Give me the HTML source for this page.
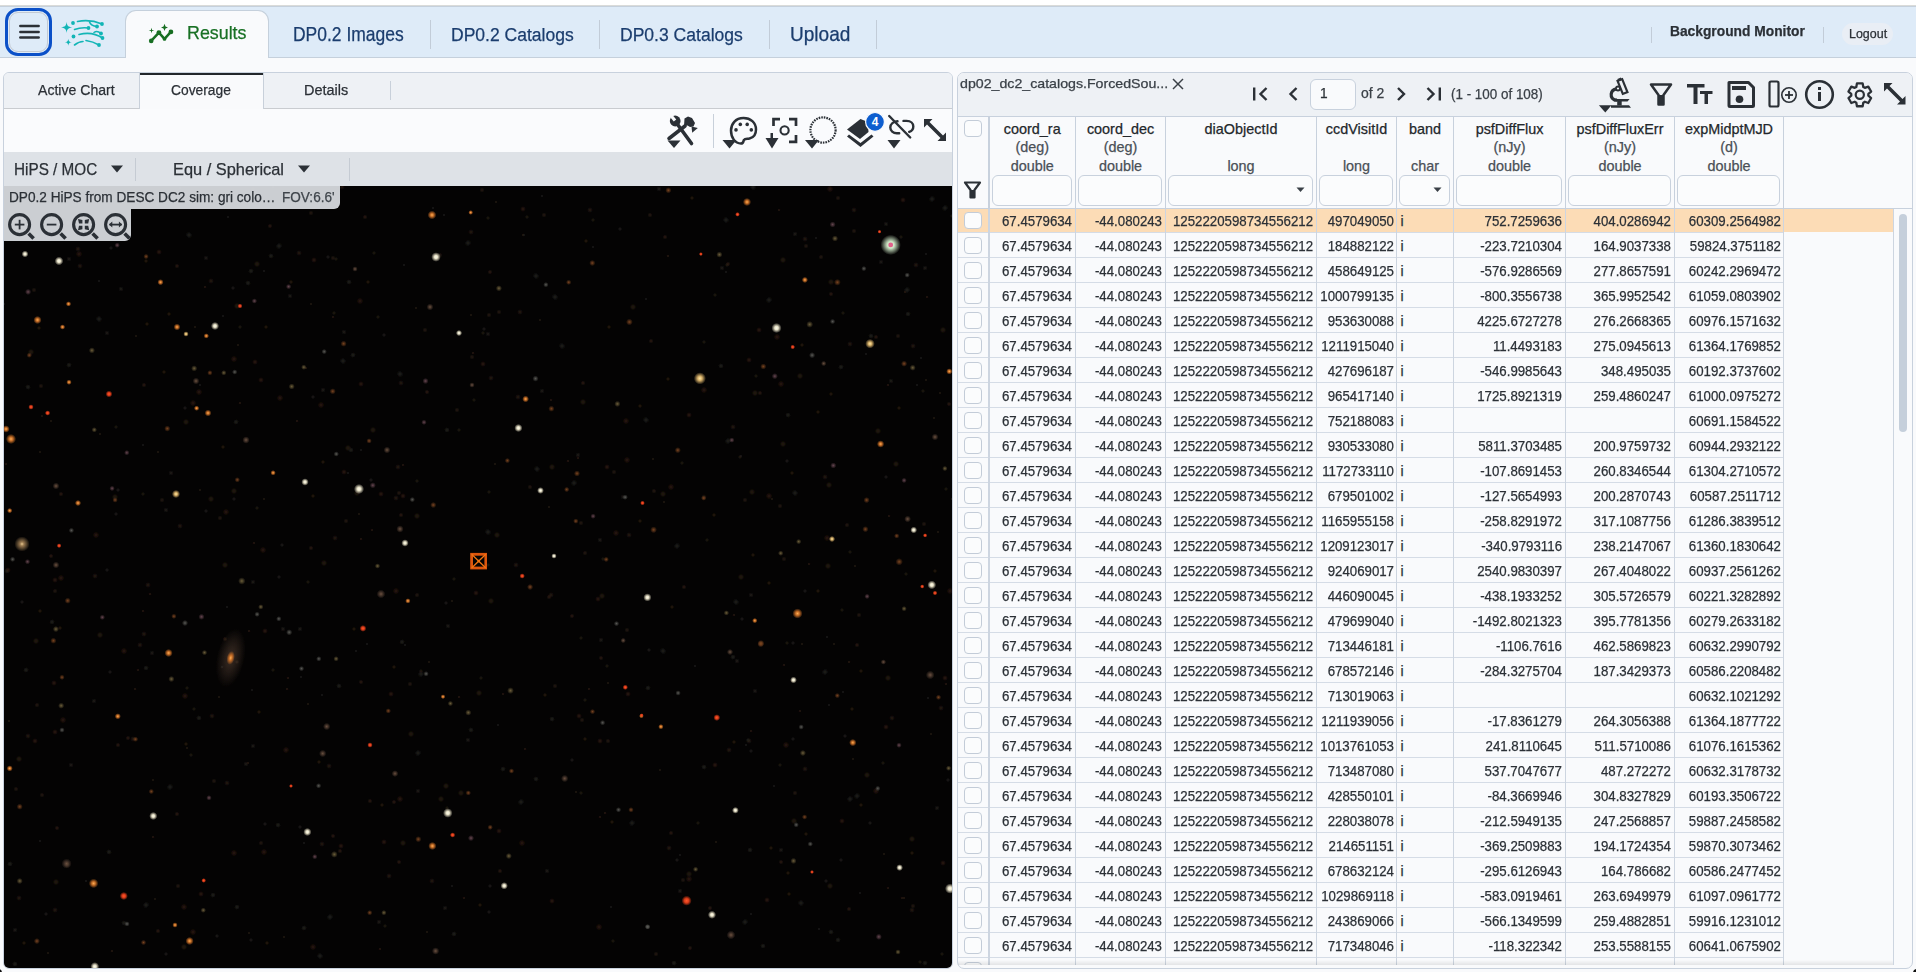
<!DOCTYPE html><html><head><meta charset="utf-8"><title>Firefly</title><style>
*{box-sizing:border-box}
html,body{margin:0;padding:0}
body{width:1916px;height:972px;overflow:hidden;position:relative;background:#f9fafc;font-family:"Liberation Sans",sans-serif;color:#2b3036}
.a{position:absolute}
.t{position:absolute;white-space:pre;line-height:1;-webkit-text-stroke:0.25px currentColor}
.c{width:200px;text-align:right;font-size:14px;color:#2b3036;transform:scaleX(0.947);transform-origin:100% 50%}
</style></head><body>
<div class="a" style="left:0px;top:0px;width:1916px;height:5px;background:#ffffff"></div>
<div class="a" style="left:0px;top:5px;width:1916px;height:1px;background:#dadbd9"></div>
<div class="a" style="left:0px;top:6px;width:1916px;height:1px;background:#c5d0dc"></div>
<div class="a" style="left:0px;top:7px;width:1916px;height:50px;background:#deebf8"></div>
<div class="a" style="left:0px;top:57px;width:1916px;height:1px;background:#c5d0dc"></div>
<div class="a" style="left:5px;top:8px;width:47px;height:48px;border:3.5px solid #0b50c8;border-radius:13px"></div>
<div class="a" style="left:9px;top:12px;width:39px;height:40px;border:1px solid #c3cad3;border-radius:9px"></div>
<svg class="a" style="left:19px;top:24px;" width="21" height="15" viewBox="0 0 21 15"><g stroke="#2b3036" stroke-width="2.4" stroke-linecap="round"><line x1="1.3" y1="2" x2="19.7" y2="2"/><line x1="1.3" y1="8" x2="19.7" y2="8"/><line x1="1.3" y1="13.5" x2="19.7" y2="13.5"/></g></svg>
<svg class="a" style="left:60px;top:18px;" width="46" height="32" viewBox="0 0 46 32"><g fill="#12b5b6" stroke="none">
<path d="M1.00 9.40 C5.03 8.98 6.18 7.83 6.60 3.80 C7.02 7.83 8.17 8.98 12.20 9.40 C8.17 9.82 7.02 10.97 6.60 15.00 C6.18 10.97 5.03 9.82 1.00 9.40Z"/>
<path d="M4.80 24.20 C7.32 23.94 8.04 23.22 8.30 20.70 C8.56 23.22 9.28 23.94 11.80 24.20 C9.28 24.46 8.56 25.18 8.30 27.70 C8.04 25.18 7.32 24.46 4.80 24.20Z"/>
<circle cx="13" cy="5" r="1.9"/><circle cx="13.5" cy="18.5" r="1.9"/>
<circle cx="42" cy="6" r="1.9"/><circle cx="37" cy="8.5" r="1.9"/><circle cx="28.5" cy="10" r="1.9"/>
<circle cx="41" cy="15.5" r="1.9"/><circle cx="42.5" cy="20" r="1.9"/><circle cx="39" cy="27" r="1.9"/>
</g><g fill="none" stroke="#12b5b6" stroke-width="1.6" stroke-linecap="round">
<path d="M17.5 3.5 Q30 1 42 6"/><path d="M29.5 4 Q31 8 37 8.5"/>
<path d="M14.5 11.5 Q21 9 28.5 10"/>
<path d="M19 16.5 Q32 13 42.5 20"/><path d="M34 14.5 Q37 12 41 15.5"/>
<path d="M14.5 27 Q19 23.5 23 23.5"/><path d="M26 22.5 Q33 23.5 39 27"/>
</g></svg>
<div class="a" style="left:125px;top:10px;width:144px;height:48px;background:#f9fafc;border:1px solid #c5d0dc;border-bottom:none;border-radius:11px 11px 0 0"></div>
<svg class="a" style="left:147px;top:23px;" width="28" height="22" viewBox="0 0 28 22"><g fill="#176e22"><path d="M17.5 0.8 L18.5 3.4 L21 4.4 L18.5 5.4 L17.5 8 L16.5 5.4 L14 4.4 L16.5 3.4Z"/>
<path d="M4.5 4.7 L5.1 6.9 L7.3 7.5 L5.1 8.1 L4.5 10.3 L3.9 8.1 L1.7 7.5 L3.9 6.9Z"/>
<circle cx="4.2" cy="17.9" r="2.3"/><circle cx="11.9" cy="9.6" r="2.4"/><circle cx="17.5" cy="15.9" r="1.9"/><circle cx="23.9" cy="8.9" r="2.4"/></g>
<path d="M4.2 17.9 L11.9 9.6 L17.5 15.9 L23.9 8.9" fill="none" stroke="#176e22" stroke-width="2.5" stroke-linejoin="round" stroke-linecap="round"/></svg>
<div class="t" style="left:186.97px;top:23.95px;font-size:18.84px;color:#187024;transform:scaleX(0.9478);transform-origin:0 0;">Results</div>
<div class="t" style="left:293.30px;top:24.56px;font-size:19.42px;color:#1b3d6e;transform:scaleX(0.9007);transform-origin:0 0;">DP0.2 Images</div>
<div class="t" style="left:450.90px;top:24.80px;font-size:19.13px;color:#1b3d6e;transform:scaleX(0.9172);transform-origin:0 0;">DP0.2 Catalogs</div>
<div class="t" style="left:620.10px;top:24.92px;font-size:18.99px;color:#1b3d6e;transform:scaleX(0.9235);transform-origin:0 0;">DP0.3 Catalogs</div>
<div class="t" style="left:789.67px;top:24.56px;font-size:19.42px;color:#1b3d6e;transform:scaleX(0.9821);transform-origin:0 0;">Upload</div>
<div class="a" style="left:429.5px;top:20px;width:1.0px;height:29px;background:#c2ccd8"></div>
<div class="a" style="left:598.5px;top:20px;width:1.0px;height:29px;background:#c2ccd8"></div>
<div class="a" style="left:768.5px;top:20px;width:1.0px;height:29px;background:#c2ccd8"></div>
<div class="a" style="left:875.5px;top:20px;width:1.0px;height:29px;background:#c2ccd8"></div>
<div class="a" style="left:1651px;top:27px;width:1px;height:16px;background:#c2ccd8"></div>
<div class="t" style="left:1670.03px;top:24.48px;font-size:14.78px;color:#2b3036;transform:scaleX(0.9334);transform-origin:0 0;font-weight:700;">Background Monitor</div>
<div class="a" style="left:1823px;top:27px;width:1px;height:16px;background:#c2ccd8"></div>
<div class="a" style="left:1842px;top:23px;width:51px;height:22px;background:#e9eef5;border-radius:11px"></div>
<div class="t" style="left:1848.80px;top:27.57px;font-size:12.32px;color:#2b3036;transform:scaleX(1.0113);transform-origin:0 0;">Logout</div>
<div class="a" style="left:3px;top:72px;width:950px;height:897px;border:1px solid #c8d1dd;border-radius:6px;background:#f9fafc;overflow:hidden"></div>
<div class="a" style="left:4px;top:73px;width:948px;height:35px;background:#eef1f5;border-radius:5px 5px 0 0"></div>
<div class="a" style="left:4px;top:108px;width:948px;height:1px;background:#c9ccd0"></div>
<div class="a" style="left:139px;top:73px;width:1px;height:36px;background:#c8d0da"></div>
<div class="a" style="left:140px;top:73px;width:124px;height:36px;background:#f9fafc"></div>
<div class="a" style="left:140px;top:73px;width:124px;height:2px;background:#23272b"></div>
<div class="a" style="left:263px;top:73px;width:1px;height:36px;background:#c8d0da"></div>
<div class="a" style="left:390px;top:81px;width:1px;height:19px;background:#c8d0da"></div>
<div class="t" style="left:38.30px;top:82.07px;font-size:15.51px;color:#2b3036;transform:scaleX(0.9080);transform-origin:0 0;">Active Chart</div>
<div class="t" style="left:171.41px;top:82.07px;font-size:15.51px;color:#2b3036;transform:scaleX(0.8912);transform-origin:0 0;">Coverage</div>
<div class="t" style="left:304.04px;top:82.07px;font-size:15.51px;color:#2b3036;transform:scaleX(0.9344);transform-origin:0 0;">Details</div>
<div class="a" style="left:4px;top:109px;width:948px;height:43px;background:#fafbfd"></div>
<svg class="a" style="left:664px;top:112px;" width="36" height="38" viewBox="0 0 36 38"><g fill="#2b3036" stroke="none">
<circle cx="11.2" cy="9" r="5.4"/>
<path d="M20.5 6.5 L24 4.5 L28 6 L31 11 L29.5 14.5 L26 15 L23.5 13.5 L20 14 Z"/>
<path d="M27.5 14.5 L33.8 16 L28.2 20.8 Z"/>
<path d="M3.5 28.5 L16.5 28.5 L10 36 Z"/>
</g><g stroke="#2b3036" stroke-width="3.6" stroke-linecap="round" fill="none">
<line x1="12.5" y1="11" x2="27.5" y2="31.5"/><line x1="21" y1="14" x2="5" y2="26.5"/></g>
<line x1="11" y1="8.5" x2="6" y2="2.5" stroke="#f9fafc" stroke-width="3.2"/></svg>
<div class="a" style="left:713px;top:114px;width:1px;height:34px;background:#c8d0da"></div>
<svg class="a" style="left:721px;top:114px;" width="40" height="36" viewBox="0 0 40 36"><path d="M22.5 4 C14.5 4 10 10 10 16.5 C10 23.5 14 29.5 20 29.5 C23 29.5 22 27 23 26 C24 24.5 26 25 28.5 24.5 C33 23.5 35 20 35 15.5 C35 8.5 29.5 4 22.5 4Z" fill="none" stroke="#2b3036" stroke-width="2.5"/>
<g fill="#2b3036"><circle cx="15" cy="15.9" r="1.8"/><circle cx="19.3" cy="10.4" r="1.8"/><circle cx="26.2" cy="10.4" r="1.8"/><circle cx="30.3" cy="15.9" r="1.8"/>
<path d="M1.5 26 L15.5 26 L8.5 34.5Z"/></g></svg>
<svg class="a" style="left:764px;top:114px;" width="36" height="36" viewBox="0 0 36 36"><g fill="none" stroke="#2b3036" stroke-width="2.7">
<path d="M9.5 12 V5.2 H16"/><path d="M25 5.2 H32 V12"/><path d="M32 21 V27.8 H25"/><circle cx="20.6" cy="16.4" r="4.1" stroke-width="2.1"/>
</g><g fill="#2b3036"><rect x="6.5" y="19" width="2.5" height="8"/><path d="M1.5 24 L14.5 24 L8 34.5Z"/></g></svg>
<svg class="a" style="left:803px;top:114px;" width="36" height="36" viewBox="0 0 36 36"><circle cx="20" cy="16" r="12.6" fill="none" stroke="#2b3036" stroke-width="2.2" stroke-dasharray="1.6 1.0"/>
<path d="M2 26 L16 26 L9 34.5Z" fill="#2b3036"/></svg>
<svg class="a" style="left:845px;top:110px;" width="42" height="40" viewBox="0 0 42 40"><g fill="#2b3036"><path d="M2 19.5 L15.5 9 L23 12 L23.5 22 L15 29 Z"/>
<path d="M2 26.5 L15.5 37 L28.5 26.5 L26.5 24.5 L15.5 33 L4 24.5Z"/></g>
<circle cx="30" cy="11.9" r="9.4" fill="#0e5ecf" stroke="#f9fafc" stroke-width="1.2"/>
<text x="30" y="16.3" text-anchor="middle" font-family="Liberation Sans" font-weight="700" font-size="12" fill="#fff">4</text></svg>
<svg class="a" style="left:886px;top:114px;" width="30" height="36" viewBox="0 0 30 36"><g fill="none" stroke="#2b3036" stroke-width="2.4" stroke-linecap="round">
<path d="M11.5 7.3 C7 7.8 4.3 10.6 4.3 13.5 C4.3 16.8 7.2 19.3 10.8 19.3 L13.2 19.3"/>
<path d="M17.5 6.9 L20.5 6.9 C25 6.9 27.3 9.6 27.3 12.4 C27.3 15 25.6 17 23.2 17.9"/>
<line x1="3.2" y1="2" x2="24.2" y2="23.5"/></g>
<path d="M1.5 26 L14.5 26 L8 34.5Z" fill="#2b3036"/></svg>
<svg class="a" style="left:922px;top:117px;" width="27" height="27" viewBox="0 0 27 27"><g fill="#2b3036"><path d="M2 2 L10.5 2 L7.5 5 L21 18.5 L24 15.5 L24 24 L15.5 24 L18.5 21 L5 7.5 L2 10.5Z"/></g></svg>
<div class="a" style="left:4px;top:152px;width:948px;height:34px;background:#dee2e7"></div>
<div class="t" style="left:14.48px;top:161.13px;font-size:16.38px;color:#2b3036;transform:scaleX(0.9343);transform-origin:0 0;">HiPS / MOC</div>
<svg class="a" style="left:110px;top:164px;" width="14" height="10" viewBox="0 0 14 10"><path d="M1 1.5 L13 1.5 L7 8.5Z" fill="#2b3036"/></svg>
<div class="a" style="left:135px;top:158px;width:1px;height:23px;background:#c5cbd3"></div>
<div class="t" style="left:173.39px;top:161.13px;font-size:16.38px;color:#2b3036;transform:scaleX(1.0005);transform-origin:0 0;">Equ / Spherical</div>
<svg class="a" style="left:297px;top:164px;" width="14" height="10" viewBox="0 0 14 10"><path d="M1 1.5 L13 1.5 L7 8.5Z" fill="#2b3036"/></svg>
<div class="a" style="left:349px;top:158px;width:1px;height:23px;background:#c5cbd3"></div>
<div class="a" style="left:4px;top:186px;width:948px;height:782px;background:#040303;border-radius:0 0 5px 5px;overflow:hidden">
<svg class="a" style="left:0;top:0" width="948" height="782" viewBox="4 186 948 782"><defs><radialGradient id="gw"><stop offset="0" stop-color="#fffef0"/><stop offset="0.35" stop-color="#e8e2c8"/><stop offset="1" stop-color="#e8e2c8" stop-opacity="0"/></radialGradient><radialGradient id="gy"><stop offset="0" stop-color="#ffe9a8"/><stop offset="0.35" stop-color="#d9b26a"/><stop offset="1" stop-color="#d9b26a" stop-opacity="0"/></radialGradient><radialGradient id="go"><stop offset="0" stop-color="#ffae55"/><stop offset="0.4" stop-color="#c06a25"/><stop offset="1" stop-color="#c06a25" stop-opacity="0"/></radialGradient><radialGradient id="gr"><stop offset="0" stop-color="#ff5a30"/><stop offset="0.45" stop-color="#d83a18"/><stop offset="1" stop-color="#d83a18" stop-opacity="0"/></radialGradient><radialGradient id="f1"><stop offset="0" stop-color="#261c14"/><stop offset="1" stop-color="#261c14" stop-opacity="0"/></radialGradient><radialGradient id="f2"><stop offset="0" stop-color="#201f1d"/><stop offset="1" stop-color="#201f1d" stop-opacity="0"/></radialGradient><radialGradient id="f3"><stop offset="0" stop-color="#2c1a12"/><stop offset="1" stop-color="#2c1a12" stop-opacity="0"/></radialGradient><radialGradient id="gbg"><stop offset="0" stop-color="#f0ffe8"/><stop offset="0.35" stop-color="#c8e0c0"/><stop offset="1" stop-color="#c8e0c0" stop-opacity="0"/></radialGradient><radialGradient id="gdy2"><stop offset="0" stop-color="#e8c890"/><stop offset="0.25" stop-color="#9a7a50"/><stop offset="1" stop-color="#9a7a50" stop-opacity="0"/></radialGradient><radialGradient id="gg"><stop offset="0" stop-color="#5a5a56"/><stop offset="1" stop-color="#5a5a56" stop-opacity="0"/></radialGradient><radialGradient id="gp"><stop offset="0" stop-color="#664650"/><stop offset="1" stop-color="#664650" stop-opacity="0"/></radialGradient><radialGradient id="gdy"><stop offset="0" stop-color="#6c5e3a"/><stop offset="1" stop-color="#6c5e3a" stop-opacity="0"/></radialGradient><radialGradient id="gdo"><stop offset="0" stop-color="#7a4420"/><stop offset="1" stop-color="#7a4420" stop-opacity="0"/></radialGradient><radialGradient id="gd"><stop offset="0" stop-color="#6a5040"/><stop offset="1" stop-color="#6a5040" stop-opacity="0"/></radialGradient><filter id="bl" x="-10%" y="-10%" width="120%" height="120%"><feGaussianBlur stdDeviation="0.55"/></filter></defs><g filter="url(#bl)"><circle cx="311" cy="304" r="1.8" fill="url(#f1)"/><circle cx="783" cy="260" r="3.4" fill="url(#f1)"/><circle cx="866" cy="354" r="1.8" fill="url(#f2)"/><circle cx="400" cy="374" r="3.4" fill="url(#f2)"/><circle cx="60" cy="628" r="2.2" fill="url(#f3)"/><circle cx="599" cy="927" r="3.4" fill="url(#f3)"/><circle cx="380" cy="949" r="1.8" fill="url(#f3)"/><circle cx="818" cy="412" r="2.2" fill="url(#f3)"/><circle cx="116" cy="427" r="2.2" fill="url(#f1)"/><circle cx="555" cy="686" r="2.6" fill="url(#f1)"/><circle cx="523" cy="235" r="1.8" fill="url(#f3)"/><circle cx="199" cy="718" r="3.0" fill="url(#f2)"/><circle cx="445" cy="908" r="2.6" fill="url(#f2)"/><circle cx="240" cy="327" r="2.2" fill="url(#f1)"/><circle cx="549" cy="597" r="2.6" fill="url(#f3)"/><circle cx="429" cy="662" r="1.8" fill="url(#f1)"/><circle cx="489" cy="315" r="2.6" fill="url(#f1)"/><circle cx="889" cy="516" r="1.8" fill="url(#f3)"/><circle cx="547" cy="871" r="2.6" fill="url(#f2)"/><circle cx="663" cy="651" r="3.4" fill="url(#f2)"/><circle cx="69" cy="259" r="2.6" fill="url(#f2)"/><circle cx="665" cy="237" r="2.6" fill="url(#f3)"/><circle cx="552" cy="719" r="3.0" fill="url(#f2)"/><circle cx="683" cy="880" r="2.6" fill="url(#f1)"/><circle cx="896" cy="464" r="3.4" fill="url(#f1)"/><circle cx="472" cy="357" r="2.6" fill="url(#f1)"/><circle cx="704" cy="497" r="3.0" fill="url(#f1)"/><circle cx="162" cy="500" r="2.6" fill="url(#f1)"/><circle cx="781" cy="862" r="2.6" fill="url(#f3)"/><circle cx="398" cy="467" r="3.0" fill="url(#f1)"/><circle cx="147" cy="324" r="2.2" fill="url(#f3)"/><circle cx="225" cy="565" r="3.4" fill="url(#f1)"/><circle cx="253" cy="189" r="3.0" fill="url(#f3)"/><circle cx="354" cy="629" r="2.2" fill="url(#f3)"/><circle cx="819" cy="929" r="1.8" fill="url(#f2)"/><circle cx="857" cy="796" r="3.4" fill="url(#f2)"/><circle cx="381" cy="494" r="3.0" fill="url(#f3)"/><circle cx="384" cy="335" r="2.2" fill="url(#f2)"/><circle cx="158" cy="452" r="1.8" fill="url(#f1)"/><circle cx="4" cy="304" r="1.8" fill="url(#f2)"/><circle cx="586" cy="241" r="2.2" fill="url(#f3)"/><circle cx="361" cy="682" r="2.6" fill="url(#f3)"/><circle cx="349" cy="282" r="3.0" fill="url(#f2)"/><circle cx="459" cy="430" r="2.2" fill="url(#f1)"/><circle cx="715" cy="765" r="3.0" fill="url(#f3)"/><circle cx="157" cy="204" r="3.4" fill="url(#f2)"/><circle cx="143" cy="611" r="1.8" fill="url(#f3)"/><circle cx="287" cy="689" r="1.8" fill="url(#f3)"/><circle cx="805" cy="591" r="2.2" fill="url(#f2)"/><circle cx="736" cy="602" r="3.4" fill="url(#f2)"/><circle cx="607" cy="666" r="2.2" fill="url(#f1)"/><circle cx="780" cy="765" r="2.2" fill="url(#f1)"/><circle cx="495" cy="464" r="1.8" fill="url(#f1)"/><circle cx="753" cy="555" r="2.2" fill="url(#f3)"/><circle cx="578" cy="455" r="2.6" fill="url(#f2)"/><circle cx="80" cy="266" r="3.0" fill="url(#f1)"/><circle cx="324" cy="563" r="3.4" fill="url(#f1)"/><circle cx="459" cy="697" r="1.8" fill="url(#f3)"/><circle cx="118" cy="490" r="2.2" fill="url(#f2)"/><circle cx="847" cy="525" r="2.6" fill="url(#f1)"/><circle cx="763" cy="946" r="3.0" fill="url(#f2)"/><circle cx="385" cy="926" r="2.2" fill="url(#f1)"/><circle cx="945" cy="208" r="3.4" fill="url(#f2)"/><circle cx="769" cy="300" r="3.4" fill="url(#f2)"/><circle cx="627" cy="460" r="3.4" fill="url(#f3)"/><circle cx="128" cy="197" r="1.8" fill="url(#f3)"/><circle cx="715" cy="295" r="2.2" fill="url(#f1)"/><circle cx="31" cy="352" r="3.4" fill="url(#f1)"/><circle cx="728" cy="441" r="3.4" fill="url(#f2)"/><circle cx="795" cy="234" r="2.6" fill="url(#f2)"/><circle cx="632" cy="823" r="3.4" fill="url(#f2)"/><circle cx="788" cy="873" r="2.2" fill="url(#f3)"/><circle cx="148" cy="585" r="3.0" fill="url(#f1)"/><circle cx="581" cy="793" r="2.2" fill="url(#f1)"/><circle cx="138" cy="670" r="1.8" fill="url(#f3)"/><circle cx="63" cy="720" r="3.4" fill="url(#f3)"/><circle cx="461" cy="793" r="3.4" fill="url(#f1)"/><circle cx="240" cy="403" r="1.8" fill="url(#f3)"/><circle cx="433" cy="208" r="1.8" fill="url(#f2)"/><circle cx="313" cy="947" r="3.4" fill="url(#f3)"/><circle cx="193" cy="403" r="3.4" fill="url(#f3)"/><circle cx="769" cy="583" r="2.2" fill="url(#f3)"/><circle cx="500" cy="871" r="2.6" fill="url(#f3)"/><circle cx="850" cy="344" r="3.0" fill="url(#f1)"/><circle cx="399" cy="493" r="2.6" fill="url(#f1)"/><circle cx="640" cy="521" r="2.2" fill="url(#f3)"/><circle cx="291" cy="282" r="2.2" fill="url(#f3)"/><circle cx="614" cy="472" r="2.6" fill="url(#f1)"/><circle cx="921" cy="358" r="1.8" fill="url(#f2)"/><circle cx="843" cy="313" r="2.2" fill="url(#f1)"/><circle cx="674" cy="963" r="3.0" fill="url(#f2)"/><circle cx="403" cy="465" r="1.8" fill="url(#f3)"/><circle cx="351" cy="450" r="3.0" fill="url(#f2)"/><circle cx="671" cy="487" r="3.4" fill="url(#f3)"/><circle cx="284" cy="937" r="1.8" fill="url(#f1)"/><circle cx="925" cy="268" r="2.6" fill="url(#f2)"/><circle cx="42" cy="795" r="2.6" fill="url(#f1)"/><circle cx="781" cy="850" r="2.6" fill="url(#f2)"/><circle cx="146" cy="905" r="3.4" fill="url(#f2)"/><circle cx="668" cy="256" r="1.8" fill="url(#f3)"/><circle cx="178" cy="886" r="2.6" fill="url(#f1)"/><circle cx="605" cy="813" r="1.8" fill="url(#f3)"/><circle cx="816" cy="238" r="1.8" fill="url(#f2)"/><circle cx="15" cy="964" r="3.0" fill="url(#f2)"/><circle cx="593" cy="220" r="2.2" fill="url(#f1)"/><circle cx="923" cy="391" r="2.2" fill="url(#f1)"/><circle cx="888" cy="678" r="3.4" fill="url(#f1)"/><circle cx="279" cy="577" r="2.2" fill="url(#f2)"/><circle cx="333" cy="200" r="2.6" fill="url(#f1)"/><circle cx="19" cy="759" r="3.4" fill="url(#f1)"/><circle cx="491" cy="378" r="3.0" fill="url(#f1)"/><circle cx="628" cy="694" r="3.0" fill="url(#f3)"/><circle cx="795" cy="493" r="3.4" fill="url(#f2)"/><circle cx="656" cy="954" r="2.6" fill="url(#f1)"/><circle cx="793" cy="739" r="2.2" fill="url(#f2)"/><circle cx="942" cy="954" r="2.2" fill="url(#f1)"/><circle cx="71" cy="765" r="2.6" fill="url(#f2)"/><circle cx="159" cy="252" r="3.0" fill="url(#f3)"/><circle cx="640" cy="406" r="2.2" fill="url(#f3)"/><circle cx="282" cy="545" r="2.2" fill="url(#f2)"/><circle cx="427" cy="392" r="2.6" fill="url(#f3)"/><circle cx="311" cy="213" r="2.6" fill="url(#f1)"/><circle cx="342" cy="187" r="3.0" fill="url(#f1)"/><circle cx="454" cy="579" r="2.2" fill="url(#f1)"/><circle cx="482" cy="190" r="2.6" fill="url(#f1)"/><circle cx="140" cy="645" r="3.0" fill="url(#f1)"/><circle cx="288" cy="678" r="1.8" fill="url(#f3)"/><circle cx="912" cy="853" r="2.2" fill="url(#f3)"/><circle cx="850" cy="799" r="3.4" fill="url(#f2)"/><circle cx="729" cy="750" r="3.0" fill="url(#f1)"/><circle cx="273" cy="670" r="2.2" fill="url(#f1)"/><circle cx="786" cy="745" r="3.4" fill="url(#f3)"/><circle cx="411" cy="734" r="3.4" fill="url(#f1)"/><circle cx="867" cy="775" r="3.4" fill="url(#f1)"/><circle cx="787" cy="643" r="2.2" fill="url(#f1)"/><circle cx="34" cy="290" r="2.6" fill="url(#f1)"/><circle cx="361" cy="539" r="1.8" fill="url(#f3)"/><circle cx="22" cy="602" r="2.2" fill="url(#f2)"/><circle cx="254" cy="543" r="1.8" fill="url(#f3)"/><circle cx="888" cy="888" r="1.8" fill="url(#f3)"/><circle cx="503" cy="769" r="3.0" fill="url(#f2)"/><circle cx="771" cy="848" r="2.2" fill="url(#f3)"/><circle cx="721" cy="366" r="3.0" fill="url(#f2)"/><circle cx="806" cy="246" r="2.6" fill="url(#f1)"/><circle cx="589" cy="689" r="1.8" fill="url(#f3)"/><circle cx="144" cy="385" r="2.6" fill="url(#f3)"/><circle cx="542" cy="196" r="1.8" fill="url(#f2)"/><circle cx="259" cy="712" r="2.2" fill="url(#f3)"/><circle cx="468" cy="740" r="2.6" fill="url(#f2)"/><circle cx="446" cy="786" r="3.4" fill="url(#f1)"/><circle cx="299" cy="253" r="3.0" fill="url(#f1)"/><circle cx="279" cy="246" r="3.4" fill="url(#f2)"/><circle cx="946" cy="489" r="2.2" fill="url(#f1)"/><circle cx="555" cy="297" r="3.4" fill="url(#f2)"/><circle cx="907" cy="290" r="3.4" fill="url(#f2)"/><circle cx="845" cy="736" r="2.2" fill="url(#f2)"/><circle cx="855" cy="566" r="1.8" fill="url(#f1)"/><circle cx="7" cy="571" r="3.0" fill="url(#f2)"/><circle cx="290" cy="296" r="2.6" fill="url(#f2)"/><circle cx="304" cy="843" r="1.8" fill="url(#f2)"/><circle cx="716" cy="842" r="1.8" fill="url(#f1)"/><circle cx="680" cy="891" r="2.6" fill="url(#f2)"/><circle cx="357" cy="493" r="3.4" fill="url(#f1)"/><circle cx="346" cy="521" r="2.6" fill="url(#f1)"/><circle cx="270" cy="226" r="2.6" fill="url(#f3)"/><circle cx="891" cy="381" r="2.6" fill="url(#f2)"/><circle cx="488" cy="334" r="2.6" fill="url(#f2)"/><circle cx="842" cy="821" r="3.0" fill="url(#f3)"/><circle cx="525" cy="749" r="1.8" fill="url(#f3)"/><circle cx="394" cy="667" r="2.2" fill="url(#f3)"/><circle cx="828" cy="566" r="3.4" fill="url(#f1)"/><circle cx="166" cy="510" r="2.6" fill="url(#f2)"/><circle cx="246" cy="764" r="2.6" fill="url(#f2)"/><circle cx="626" cy="421" r="3.4" fill="url(#f3)"/><circle cx="378" cy="317" r="2.2" fill="url(#f1)"/><circle cx="201" cy="894" r="3.0" fill="url(#f3)"/><circle cx="213" cy="895" r="3.0" fill="url(#f2)"/><circle cx="136" cy="336" r="1.8" fill="url(#f1)"/><circle cx="328" cy="257" r="2.2" fill="url(#f2)"/><circle cx="249" cy="631" r="1.8" fill="url(#f3)"/><circle cx="829" cy="485" r="3.4" fill="url(#f1)"/><circle cx="361" cy="450" r="1.8" fill="url(#f2)"/><circle cx="267" cy="943" r="2.2" fill="url(#f3)"/><circle cx="481" cy="678" r="2.2" fill="url(#f1)"/><circle cx="261" cy="380" r="3.0" fill="url(#f3)"/><circle cx="427" cy="932" r="1.8" fill="url(#f1)"/><circle cx="35" cy="741" r="3.0" fill="url(#f3)"/><circle cx="468" cy="243" r="3.4" fill="url(#f2)"/><circle cx="926" cy="380" r="1.8" fill="url(#f1)"/><circle cx="150" cy="594" r="1.8" fill="url(#f3)"/><circle cx="669" cy="848" r="3.0" fill="url(#f1)"/><circle cx="527" cy="217" r="2.2" fill="url(#f1)"/><circle cx="544" cy="215" r="2.6" fill="url(#f1)"/><circle cx="598" cy="599" r="3.0" fill="url(#f3)"/><circle cx="728" cy="264" r="2.6" fill="url(#f3)"/><circle cx="898" cy="336" r="2.6" fill="url(#f1)"/><circle cx="753" cy="187" r="3.4" fill="url(#f2)"/><circle cx="949" cy="404" r="2.6" fill="url(#f3)"/><circle cx="800" cy="376" r="3.4" fill="url(#f1)"/><circle cx="523" cy="209" r="3.0" fill="url(#f3)"/><circle cx="620" cy="229" r="2.2" fill="url(#f2)"/><circle cx="843" cy="692" r="1.8" fill="url(#f2)"/><circle cx="220" cy="518" r="2.6" fill="url(#f1)"/><circle cx="471" cy="730" r="3.0" fill="url(#f2)"/><circle cx="651" cy="341" r="2.6" fill="url(#f3)"/><circle cx="805" cy="239" r="3.0" fill="url(#f1)"/><circle cx="300" cy="827" r="2.2" fill="url(#f2)"/><circle cx="214" cy="781" r="2.6" fill="url(#f1)"/><circle cx="906" cy="574" r="2.2" fill="url(#f1)"/><circle cx="464" cy="898" r="1.8" fill="url(#f3)"/><circle cx="143" cy="494" r="2.2" fill="url(#f1)"/><circle cx="927" cy="297" r="1.8" fill="url(#f3)"/><circle cx="61" cy="494" r="2.6" fill="url(#f3)"/><circle cx="111" cy="248" r="2.2" fill="url(#f2)"/><circle cx="185" cy="696" r="3.4" fill="url(#f3)"/><circle cx="447" cy="430" r="3.0" fill="url(#f2)"/><circle cx="938" cy="532" r="1.8" fill="url(#f1)"/><circle cx="78" cy="249" r="3.0" fill="url(#f1)"/><circle cx="536" cy="779" r="3.0" fill="url(#f2)"/><circle cx="733" cy="427" r="3.0" fill="url(#f1)"/><circle cx="51" cy="556" r="2.6" fill="url(#f3)"/><circle cx="876" cy="337" r="2.6" fill="url(#f3)"/><circle cx="854" cy="210" r="3.0" fill="url(#f1)"/><circle cx="774" cy="786" r="1.8" fill="url(#f2)"/><circle cx="37" cy="235" r="1.8" fill="url(#f2)"/><circle cx="189" cy="235" r="3.4" fill="url(#f2)"/><circle cx="348" cy="448" r="3.4" fill="url(#f1)"/><circle cx="253" cy="746" r="2.6" fill="url(#f2)"/><circle cx="286" cy="750" r="3.4" fill="url(#f3)"/><circle cx="901" cy="237" r="2.2" fill="url(#f1)"/><circle cx="454" cy="934" r="3.0" fill="url(#f2)"/><circle cx="870" cy="823" r="2.2" fill="url(#f2)"/><circle cx="177" cy="814" r="2.6" fill="url(#f3)"/><circle cx="737" cy="661" r="2.6" fill="url(#f2)"/><circle cx="441" cy="799" r="3.4" fill="url(#f1)"/><circle cx="489" cy="492" r="2.2" fill="url(#f1)"/><circle cx="391" cy="694" r="3.0" fill="url(#f3)"/><circle cx="520" cy="312" r="3.0" fill="url(#f1)"/><circle cx="940" cy="393" r="1.8" fill="url(#f1)"/><circle cx="95" cy="576" r="3.0" fill="url(#f1)"/><circle cx="226" cy="512" r="3.4" fill="url(#f3)"/><circle cx="227" cy="607" r="1.8" fill="url(#f2)"/><circle cx="283" cy="629" r="2.6" fill="url(#f2)"/><circle cx="704" cy="342" r="2.2" fill="url(#f1)"/><circle cx="237" cy="306" r="3.4" fill="url(#f1)"/><circle cx="313" cy="496" r="2.2" fill="url(#f3)"/><circle cx="503" cy="694" r="1.8" fill="url(#f3)"/><circle cx="444" cy="215" r="1.8" fill="url(#f2)"/><circle cx="841" cy="367" r="3.0" fill="url(#f2)"/><circle cx="42" cy="416" r="1.8" fill="url(#f1)"/><circle cx="184" cy="947" r="3.4" fill="url(#f1)"/><circle cx="886" cy="477" r="2.2" fill="url(#f2)"/><circle cx="576" cy="792" r="1.8" fill="url(#f1)"/><circle cx="608" cy="741" r="2.6" fill="url(#f1)"/><circle cx="40" cy="452" r="1.8" fill="url(#f1)"/><circle cx="952" cy="216" r="2.2" fill="url(#f1)"/><circle cx="780" cy="506" r="2.6" fill="url(#f1)"/><circle cx="593" cy="247" r="1.8" fill="url(#f2)"/><circle cx="524" cy="235" r="1.8" fill="url(#f2)"/><circle cx="633" cy="307" r="3.4" fill="url(#f1)"/><circle cx="623" cy="497" r="2.6" fill="url(#f2)"/><circle cx="941" cy="708" r="3.0" fill="url(#f1)"/><circle cx="300" cy="629" r="2.6" fill="url(#f2)"/><circle cx="399" cy="862" r="2.6" fill="url(#f3)"/><circle cx="191" cy="755" r="2.2" fill="url(#f1)"/><circle cx="416" cy="308" r="1.8" fill="url(#f1)"/><circle cx="389" cy="876" r="3.0" fill="url(#f1)"/><circle cx="127" cy="226" r="2.2" fill="url(#f3)"/><circle cx="769" cy="496" r="3.4" fill="url(#f3)"/><circle cx="883" cy="763" r="2.2" fill="url(#f1)"/><circle cx="334" cy="313" r="2.2" fill="url(#f1)"/><circle cx="107" cy="570" r="2.2" fill="url(#f2)"/><circle cx="124" cy="923" r="3.0" fill="url(#f2)"/><circle cx="55" cy="910" r="3.0" fill="url(#f1)"/><circle cx="861" cy="671" r="2.2" fill="url(#f3)"/><circle cx="749" cy="360" r="3.0" fill="url(#f3)"/><circle cx="806" cy="834" r="2.2" fill="url(#f3)"/><circle cx="211" cy="499" r="3.4" fill="url(#f1)"/><circle cx="368" cy="282" r="2.2" fill="url(#f3)"/><circle cx="777" cy="337" r="3.4" fill="url(#f3)"/><circle cx="40" cy="841" r="1.8" fill="url(#f2)"/><circle cx="572" cy="616" r="2.6" fill="url(#f3)"/><circle cx="402" cy="642" r="3.0" fill="url(#f2)"/><circle cx="629" cy="535" r="3.0" fill="url(#f1)"/><circle cx="26" cy="670" r="3.0" fill="url(#f2)"/><circle cx="227" cy="783" r="3.0" fill="url(#f1)"/><circle cx="772" cy="499" r="1.8" fill="url(#f1)"/><circle cx="344" cy="472" r="3.0" fill="url(#f3)"/><circle cx="488" cy="218" r="2.2" fill="url(#f1)"/><circle cx="878" cy="431" r="3.4" fill="url(#f1)"/><circle cx="55" cy="580" r="3.0" fill="url(#f3)"/><circle cx="905" cy="292" r="1.8" fill="url(#f3)"/><circle cx="698" cy="823" r="2.2" fill="url(#f1)"/><circle cx="935" cy="571" r="2.2" fill="url(#f3)"/><circle cx="751" cy="914" r="1.8" fill="url(#f2)"/><circle cx="583" cy="383" r="2.6" fill="url(#f3)"/><circle cx="265" cy="824" r="2.2" fill="url(#f2)"/><circle cx="480" cy="905" r="2.2" fill="url(#f3)"/><circle cx="253" cy="582" r="2.6" fill="url(#f2)"/><circle cx="39" cy="328" r="2.2" fill="url(#f3)"/><circle cx="892" cy="718" r="3.0" fill="url(#f1)"/><circle cx="755" cy="393" r="3.4" fill="url(#f1)"/><circle cx="607" cy="467" r="3.0" fill="url(#f3)"/><circle cx="498" cy="725" r="1.8" fill="url(#f2)"/><circle cx="945" cy="678" r="3.0" fill="url(#f3)"/><circle cx="760" cy="393" r="2.6" fill="url(#f3)"/><circle cx="143" cy="445" r="1.8" fill="url(#f2)"/><circle cx="222" cy="667" r="1.8" fill="url(#f2)"/><circle cx="781" cy="384" r="3.4" fill="url(#f3)"/><circle cx="853" cy="759" r="1.8" fill="url(#f1)"/><circle cx="146" cy="668" r="3.0" fill="url(#f2)"/><circle cx="490" cy="886" r="2.2" fill="url(#f2)"/><circle cx="219" cy="697" r="1.8" fill="url(#f1)"/><circle cx="6" cy="464" r="1.8" fill="url(#f3)"/><circle cx="343" cy="361" r="3.4" fill="url(#f2)"/><circle cx="562" cy="346" r="3.4" fill="url(#f2)"/><circle cx="154" cy="197" r="2.2" fill="url(#f3)"/><circle cx="146" cy="261" r="2.2" fill="url(#f3)"/><circle cx="745" cy="500" r="2.6" fill="url(#f1)"/><circle cx="57" cy="828" r="2.6" fill="url(#f3)"/><circle cx="616" cy="533" r="3.4" fill="url(#f3)"/><circle cx="471" cy="315" r="1.8" fill="url(#f1)"/><circle cx="62" cy="206" r="2.2" fill="url(#f1)"/><circle cx="155" cy="899" r="1.8" fill="url(#f1)"/><circle cx="585" cy="700" r="2.2" fill="url(#f1)"/><circle cx="396" cy="591" r="3.4" fill="url(#f3)"/><circle cx="612" cy="822" r="2.2" fill="url(#f3)"/><circle cx="297" cy="421" r="1.8" fill="url(#f3)"/><circle cx="746" cy="745" r="1.8" fill="url(#f2)"/><circle cx="805" cy="769" r="3.0" fill="url(#f1)"/><circle cx="707" cy="540" r="2.2" fill="url(#f1)"/><circle cx="252" cy="690" r="1.8" fill="url(#f2)"/><circle cx="849" cy="909" r="2.6" fill="url(#f3)"/><circle cx="54" cy="683" r="3.0" fill="url(#f3)"/><circle cx="751" cy="595" r="2.6" fill="url(#f2)"/><circle cx="613" cy="941" r="2.2" fill="url(#f1)"/><circle cx="838" cy="198" r="2.6" fill="url(#f1)"/><circle cx="802" cy="345" r="2.2" fill="url(#f3)"/><circle cx="871" cy="336" r="3.0" fill="url(#f2)"/><circle cx="574" cy="483" r="3.4" fill="url(#f2)"/><circle cx="452" cy="601" r="1.8" fill="url(#f1)"/><circle cx="418" cy="753" r="3.4" fill="url(#f2)"/><circle cx="752" cy="492" r="3.4" fill="url(#f1)"/><circle cx="540" cy="320" r="1.8" fill="url(#f1)"/><circle cx="110" cy="672" r="2.2" fill="url(#f2)"/><circle cx="931" cy="734" r="1.8" fill="url(#f1)"/><circle cx="135" cy="689" r="1.8" fill="url(#f3)"/><circle cx="68" cy="223" r="3.4" fill="url(#f2)"/><circle cx="193" cy="932" r="3.4" fill="url(#f3)"/><circle cx="67" cy="865" r="3.0" fill="url(#f1)"/><circle cx="238" cy="345" r="1.8" fill="url(#f1)"/><circle cx="904" cy="898" r="1.8" fill="url(#f3)"/><circle cx="603" cy="559" r="2.2" fill="url(#f1)"/><circle cx="755" cy="691" r="2.6" fill="url(#f2)"/><circle cx="323" cy="390" r="2.6" fill="url(#f2)"/><circle cx="886" cy="224" r="2.6" fill="url(#f2)"/><circle cx="733" cy="657" r="3.0" fill="url(#f2)"/><circle cx="590" cy="210" r="3.0" fill="url(#f1)"/><circle cx="418" cy="791" r="2.6" fill="url(#f2)"/><circle cx="672" cy="607" r="2.2" fill="url(#f3)"/><circle cx="821" cy="257" r="2.6" fill="url(#f1)"/><circle cx="417" cy="595" r="2.6" fill="url(#f1)"/><circle cx="8" cy="570" r="3.0" fill="url(#f3)"/><circle cx="759" cy="330" r="3.0" fill="url(#f3)"/><circle cx="333" cy="836" r="2.6" fill="url(#f3)"/><circle cx="899" cy="408" r="2.2" fill="url(#f3)"/><circle cx="223" cy="316" r="1.8" fill="url(#f2)"/><circle cx="751" cy="731" r="1.8" fill="url(#f3)"/><circle cx="314" cy="260" r="3.0" fill="url(#f3)"/><circle cx="86" cy="881" r="1.8" fill="url(#f2)"/><circle cx="199" cy="392" r="3.4" fill="url(#f3)"/><circle cx="166" cy="954" r="2.2" fill="url(#f2)"/><circle cx="124" cy="651" r="3.4" fill="url(#f3)"/><circle cx="36" cy="641" r="3.4" fill="url(#f1)"/><circle cx="827" cy="538" r="3.4" fill="url(#f3)"/><circle cx="311" cy="548" r="2.6" fill="url(#f3)"/><circle cx="223" cy="447" r="2.2" fill="url(#f3)"/><circle cx="186" cy="422" r="3.4" fill="url(#f1)"/><circle cx="690" cy="948" r="2.6" fill="url(#f3)"/><circle cx="499" cy="312" r="2.6" fill="url(#f1)"/><circle cx="249" cy="933" r="1.8" fill="url(#f1)"/><circle cx="916" cy="265" r="3.0" fill="url(#f1)"/><circle cx="937" cy="808" r="2.6" fill="url(#f2)"/><circle cx="264" cy="271" r="1.8" fill="url(#f2)"/><circle cx="200" cy="490" r="1.8" fill="url(#f1)"/><circle cx="382" cy="805" r="2.2" fill="url(#f3)"/><circle cx="934" cy="418" r="1.8" fill="url(#f1)"/><circle cx="248" cy="763" r="1.8" fill="url(#f3)"/><circle cx="234" cy="853" r="3.4" fill="url(#f3)"/><circle cx="714" cy="515" r="2.2" fill="url(#f3)"/><circle cx="689" cy="874" r="3.4" fill="url(#f1)"/><circle cx="648" cy="688" r="3.0" fill="url(#f2)"/><circle cx="301" cy="677" r="1.8" fill="url(#f2)"/><circle cx="234" cy="499" r="2.2" fill="url(#f2)"/><circle cx="809" cy="564" r="1.8" fill="url(#f3)"/><circle cx="818" cy="591" r="2.2" fill="url(#f3)"/><circle cx="315" cy="194" r="3.0" fill="url(#f1)"/><circle cx="40" cy="611" r="2.2" fill="url(#f3)"/><circle cx="745" cy="922" r="3.4" fill="url(#f2)"/><circle cx="100" cy="635" r="3.4" fill="url(#f1)"/><circle cx="684" cy="587" r="2.6" fill="url(#f3)"/><circle cx="329" cy="766" r="3.0" fill="url(#f1)"/><circle cx="943" cy="330" r="3.4" fill="url(#f1)"/><circle cx="695" cy="666" r="1.8" fill="url(#f2)"/><circle cx="264" cy="499" r="1.8" fill="url(#f1)"/><circle cx="401" cy="515" r="2.6" fill="url(#f3)"/><circle cx="255" cy="362" r="3.0" fill="url(#f3)"/><circle cx="925" cy="963" r="3.0" fill="url(#f2)"/><circle cx="205" cy="287" r="1.8" fill="url(#f3)"/><circle cx="187" cy="688" r="2.2" fill="url(#f1)"/><circle cx="339" cy="686" r="3.0" fill="url(#f2)"/><circle cx="948" cy="780" r="2.2" fill="url(#f2)"/><circle cx="340" cy="851" r="2.6" fill="url(#f3)"/><circle cx="361" cy="384" r="3.0" fill="url(#f3)"/><circle cx="180" cy="188" r="2.6" fill="url(#f2)"/><circle cx="236" cy="422" r="3.0" fill="url(#f2)"/><circle cx="410" cy="684" r="2.6" fill="url(#f1)"/><circle cx="884" cy="854" r="1.8" fill="url(#f1)"/><circle cx="789" cy="894" r="2.2" fill="url(#f3)"/><circle cx="792" cy="681" r="1.8" fill="url(#f3)"/><circle cx="15" cy="930" r="2.6" fill="url(#f2)"/><circle cx="581" cy="638" r="2.2" fill="url(#f1)"/><circle cx="740" cy="457" r="2.2" fill="url(#f1)"/><circle cx="861" cy="805" r="2.2" fill="url(#f3)"/><circle cx="849" cy="662" r="1.8" fill="url(#f3)"/><circle cx="859" cy="615" r="2.6" fill="url(#f1)"/><circle cx="473" cy="353" r="1.8" fill="url(#f3)"/><circle cx="800" cy="711" r="1.8" fill="url(#f3)"/><circle cx="116" cy="514" r="2.2" fill="url(#f2)"/><circle cx="471" cy="232" r="3.0" fill="url(#f1)"/><circle cx="668" cy="379" r="2.2" fill="url(#f3)"/><circle cx="572" cy="760" r="2.2" fill="url(#f2)"/><circle cx="448" cy="626" r="2.6" fill="url(#f2)"/><circle cx="359" cy="514" r="1.8" fill="url(#f1)"/><circle cx="608" cy="683" r="1.8" fill="url(#f1)"/><circle cx="582" cy="720" r="2.6" fill="url(#f1)"/><circle cx="488" cy="565" r="2.2" fill="url(#f1)"/><circle cx="206" cy="511" r="2.2" fill="url(#f2)"/><circle cx="94" cy="701" r="2.6" fill="url(#f2)"/><circle cx="742" cy="619" r="2.2" fill="url(#f2)"/><circle cx="417" cy="516" r="3.4" fill="url(#f1)"/><circle cx="788" cy="415" r="3.0" fill="url(#f2)"/><circle cx="320" cy="956" r="3.4" fill="url(#f2)"/><circle cx="928" cy="698" r="1.8" fill="url(#f2)"/><circle cx="186" cy="744" r="2.2" fill="url(#f3)"/><circle cx="926" cy="254" r="1.8" fill="url(#f2)"/><circle cx="689" cy="879" r="3.4" fill="url(#f3)"/><circle cx="51" cy="421" r="1.8" fill="url(#f1)"/><circle cx="184" cy="907" r="3.4" fill="url(#f3)"/><circle cx="61" cy="578" r="3.4" fill="url(#f3)"/><circle cx="360" cy="301" r="3.4" fill="url(#f3)"/><circle cx="83" cy="217" r="3.0" fill="url(#f3)"/><circle cx="727" cy="265" r="2.2" fill="url(#f1)"/><circle cx="404" cy="265" r="1.8" fill="url(#f2)"/><circle cx="831" cy="294" r="2.6" fill="url(#f3)"/><circle cx="677" cy="860" r="2.2" fill="url(#f2)"/><circle cx="36" cy="202" r="3.4" fill="url(#f3)"/><circle cx="552" cy="901" r="3.0" fill="url(#f3)"/><circle cx="499" cy="831" r="3.0" fill="url(#f3)"/><circle cx="664" cy="502" r="1.8" fill="url(#f1)"/><circle cx="649" cy="650" r="2.2" fill="url(#f2)"/><circle cx="734" cy="615" r="1.8" fill="url(#f3)"/><circle cx="452" cy="886" r="1.8" fill="url(#f2)"/><circle cx="9" cy="721" r="1.8" fill="url(#f1)"/><circle cx="211" cy="281" r="3.0" fill="url(#f1)"/><circle cx="265" cy="631" r="3.0" fill="url(#f3)"/><circle cx="710" cy="908" r="2.6" fill="url(#f3)"/><circle cx="680" cy="855" r="1.8" fill="url(#f2)"/><circle cx="600" cy="741" r="3.0" fill="url(#f3)"/><circle cx="888" cy="385" r="1.8" fill="url(#f3)"/><circle cx="34" cy="233" r="3.4" fill="url(#f1)"/><circle cx="373" cy="430" r="3.4" fill="url(#f1)"/><circle cx="912" cy="839" r="3.4" fill="url(#f1)"/><circle cx="304" cy="928" r="3.0" fill="url(#f2)"/><circle cx="646" cy="299" r="1.8" fill="url(#f2)"/><circle cx="908" cy="314" r="3.0" fill="url(#f2)"/><circle cx="370" cy="801" r="2.6" fill="url(#f3)"/><circle cx="321" cy="405" r="3.4" fill="url(#f3)"/><circle cx="671" cy="833" r="2.6" fill="url(#f3)"/><circle cx="692" cy="198" r="2.2" fill="url(#f3)"/><circle cx="793" cy="643" r="2.2" fill="url(#f2)"/><circle cx="371" cy="480" r="2.2" fill="url(#f2)"/><circle cx="273" cy="187" r="2.6" fill="url(#f2)"/><circle cx="405" cy="645" r="1.8" fill="url(#f2)"/><circle cx="794" cy="821" r="3.4" fill="url(#f1)"/><circle cx="264" cy="852" r="3.4" fill="url(#f3)"/><circle cx="741" cy="577" r="3.4" fill="url(#f1)"/><circle cx="516" cy="565" r="3.0" fill="url(#f1)"/><circle cx="751" cy="751" r="2.2" fill="url(#f2)"/><circle cx="579" cy="716" r="3.0" fill="url(#f3)"/><circle cx="200" cy="385" r="1.8" fill="url(#f2)"/><circle cx="440" cy="255" r="2.6" fill="url(#f1)"/><circle cx="225" cy="639" r="2.6" fill="url(#f3)"/><circle cx="308" cy="582" r="2.2" fill="url(#f1)"/><circle cx="206" cy="258" r="2.6" fill="url(#f2)"/><circle cx="552" cy="467" r="3.4" fill="url(#f1)"/><circle cx="237" cy="907" r="3.0" fill="url(#f2)"/><circle cx="825" cy="477" r="3.0" fill="url(#f1)"/><circle cx="152" cy="653" r="2.6" fill="url(#f2)"/><circle cx="496" cy="202" r="1.8" fill="url(#f1)"/><circle cx="943" cy="863" r="3.0" fill="url(#f3)"/><circle cx="542" cy="391" r="2.6" fill="url(#f2)"/><circle cx="96" cy="535" r="3.4" fill="url(#f3)"/><circle cx="917" cy="385" r="1.8" fill="url(#f2)"/><circle cx="195" cy="327" r="1.8" fill="url(#f1)"/><circle cx="52" cy="622" r="3.0" fill="url(#f2)"/><circle cx="902" cy="898" r="1.8" fill="url(#f3)"/><circle cx="611" cy="907" r="1.8" fill="url(#f2)"/><circle cx="306" cy="368" r="1.8" fill="url(#f3)"/><circle cx="484" cy="329" r="2.2" fill="url(#f2)"/><circle cx="920" cy="962" r="2.2" fill="url(#f1)"/><circle cx="41" cy="386" r="2.6" fill="url(#f1)"/><circle cx="860" cy="893" r="1.8" fill="url(#f2)"/><circle cx="749" cy="741" r="3.0" fill="url(#f1)"/><circle cx="100" cy="434" r="1.8" fill="url(#f1)"/><circle cx="646" cy="420" r="3.4" fill="url(#f2)"/><circle cx="722" cy="268" r="2.6" fill="url(#f2)"/><circle cx="248" cy="283" r="3.0" fill="url(#f2)"/><circle cx="164" cy="372" r="2.2" fill="url(#f3)"/><circle cx="850" cy="552" r="2.2" fill="url(#f1)"/><circle cx="153" cy="837" r="1.8" fill="url(#f3)"/><circle cx="826" cy="881" r="2.2" fill="url(#f2)"/><circle cx="912" cy="910" r="3.0" fill="url(#f1)"/><circle cx="600" cy="540" r="2.6" fill="url(#f2)"/><circle cx="784" cy="559" r="2.6" fill="url(#f1)"/><circle cx="319" cy="762" r="2.2" fill="url(#f3)"/><circle cx="432" cy="881" r="3.0" fill="url(#f1)"/><circle cx="257" cy="508" r="2.2" fill="url(#f1)"/><circle cx="261" cy="843" r="2.6" fill="url(#f1)"/><circle cx="251" cy="271" r="3.0" fill="url(#f2)"/><circle cx="112" cy="951" r="1.8" fill="url(#f3)"/><circle cx="852" cy="709" r="2.2" fill="url(#f3)"/><circle cx="457" cy="410" r="2.6" fill="url(#f1)"/><circle cx="924" cy="524" r="2.6" fill="url(#f1)"/><circle cx="881" cy="262" r="2.6" fill="url(#f2)"/><circle cx="854" cy="231" r="2.6" fill="url(#f1)"/><circle cx="932" cy="199" r="3.4" fill="url(#f2)"/><circle cx="488" cy="532" r="3.4" fill="url(#f2)"/><circle cx="180" cy="526" r="3.0" fill="url(#f1)"/><circle cx="266" cy="327" r="2.2" fill="url(#f3)"/><circle cx="734" cy="742" r="2.2" fill="url(#f3)"/><circle cx="79" cy="254" r="3.4" fill="url(#f3)"/><circle cx="474" cy="400" r="2.2" fill="url(#f1)"/><circle cx="585" cy="739" r="2.2" fill="url(#f3)"/><circle cx="296" cy="194" r="3.4" fill="url(#f2)"/><circle cx="801" cy="903" r="3.4" fill="url(#f2)"/><circle cx="322" cy="844" r="3.0" fill="url(#f1)"/><circle cx="19" cy="898" r="3.0" fill="url(#f1)"/><circle cx="831" cy="394" r="2.2" fill="url(#f3)"/><circle cx="792" cy="473" r="2.2" fill="url(#f3)"/><circle cx="356" cy="651" r="1.8" fill="url(#f2)"/><circle cx="497" cy="535" r="3.4" fill="url(#f1)"/><circle cx="118" cy="745" r="2.6" fill="url(#f3)"/><circle cx="827" cy="637" r="1.8" fill="url(#f2)"/><circle cx="831" cy="932" r="3.0" fill="url(#f2)"/><circle cx="491" cy="601" r="3.4" fill="url(#f1)"/><circle cx="24" cy="943" r="2.2" fill="url(#f3)"/><circle cx="177" cy="266" r="2.6" fill="url(#f3)"/><circle cx="779" cy="210" r="1.8" fill="url(#f3)"/><circle cx="704" cy="390" r="3.4" fill="url(#f3)"/><circle cx="551" cy="595" r="3.0" fill="url(#f1)"/><circle cx="336" cy="259" r="2.2" fill="url(#f1)"/><circle cx="263" cy="550" r="3.4" fill="url(#f3)"/><circle cx="726" cy="272" r="1.8" fill="url(#f2)"/><circle cx="842" cy="610" r="2.2" fill="url(#f1)"/><circle cx="144" cy="634" r="3.0" fill="url(#f1)"/><circle cx="903" cy="200" r="3.0" fill="url(#f3)"/><circle cx="403" cy="843" r="3.4" fill="url(#f1)"/><circle cx="379" cy="922" r="2.6" fill="url(#f2)"/><circle cx="384" cy="842" r="3.0" fill="url(#f3)"/><circle cx="767" cy="900" r="3.0" fill="url(#f3)"/><circle cx="55" cy="591" r="2.6" fill="url(#f1)"/><circle cx="829" cy="705" r="1.8" fill="url(#f2)"/><circle cx="107" cy="333" r="2.6" fill="url(#f2)"/><circle cx="194" cy="709" r="2.2" fill="url(#f1)"/><circle cx="403" cy="496" r="3.0" fill="url(#f3)"/><circle cx="48" cy="953" r="1.8" fill="url(#f1)"/><circle cx="825" cy="672" r="3.4" fill="url(#f2)"/><circle cx="600" cy="817" r="1.8" fill="url(#f3)"/><circle cx="99" cy="281" r="1.8" fill="url(#f2)"/><circle cx="228" cy="217" r="1.8" fill="url(#f2)"/><circle cx="333" cy="317" r="1.8" fill="url(#f3)"/><circle cx="913" cy="906" r="2.6" fill="url(#f1)"/><circle cx="446" cy="603" r="2.2" fill="url(#f2)"/><circle cx="121" cy="289" r="2.6" fill="url(#f2)"/><circle cx="551" cy="400" r="1.8" fill="url(#f3)"/><circle cx="522" cy="843" r="3.4" fill="url(#f3)"/><circle cx="545" cy="695" r="2.2" fill="url(#f3)"/><circle cx="677" cy="546" r="3.4" fill="url(#f2)"/><circle cx="585" cy="553" r="2.6" fill="url(#f1)"/><circle cx="234" cy="359" r="3.4" fill="url(#f3)"/><circle cx="367" cy="644" r="1.8" fill="url(#f2)"/><circle cx="158" cy="931" r="2.6" fill="url(#f3)"/><circle cx="313" cy="397" r="2.2" fill="url(#f2)"/><circle cx="58" cy="203" r="3.4" fill="url(#f1)"/><circle cx="578" cy="458" r="1.8" fill="url(#f3)"/><circle cx="372" cy="530" r="1.8" fill="url(#f3)"/><circle cx="217" cy="936" r="2.2" fill="url(#f2)"/><circle cx="323" cy="462" r="2.2" fill="url(#f3)"/><circle cx="583" cy="402" r="3.4" fill="url(#f1)"/><circle cx="704" cy="767" r="3.0" fill="url(#f2)"/><circle cx="748" cy="740" r="2.2" fill="url(#f2)"/><circle cx="830" cy="189" r="3.4" fill="url(#f3)"/><circle cx="115" cy="497" r="3.4" fill="url(#f1)"/><circle cx="400" cy="799" r="3.4" fill="url(#f3)"/><circle cx="109" cy="852" r="3.0" fill="url(#f2)"/><circle cx="689" cy="415" r="3.0" fill="url(#f3)"/><circle cx="530" cy="487" r="2.6" fill="url(#f1)"/><circle cx="750" cy="850" r="3.0" fill="url(#f2)"/><circle cx="425" cy="330" r="2.6" fill="url(#f1)"/><circle cx="417" cy="481" r="2.2" fill="url(#f1)"/><circle cx="783" cy="444" r="3.4" fill="url(#f1)"/><circle cx="913" cy="346" r="3.0" fill="url(#f1)"/><circle cx="28" cy="387" r="3.0" fill="url(#f2)"/><circle cx="876" cy="791" r="3.4" fill="url(#f3)"/><circle cx="950" cy="591" r="3.4" fill="url(#f3)"/><circle cx="654" cy="491" r="2.6" fill="url(#f1)"/><circle cx="568" cy="461" r="1.8" fill="url(#f3)"/><circle cx="69" cy="365" r="3.0" fill="url(#f2)"/><circle cx="479" cy="693" r="3.4" fill="url(#f1)"/><circle cx="838" cy="940" r="3.0" fill="url(#f2)"/><circle cx="421" cy="674" r="3.4" fill="url(#f2)"/><circle cx="660" cy="770" r="1.8" fill="url(#f1)"/><circle cx="348" cy="473" r="1.8" fill="url(#f2)"/><circle cx="490" cy="272" r="2.6" fill="url(#f3)"/><circle cx="330" cy="917" r="3.4" fill="url(#f2)"/><circle cx="602" cy="596" r="3.4" fill="url(#f1)"/><circle cx="483" cy="333" r="2.2" fill="url(#f1)"/><circle cx="601" cy="658" r="2.6" fill="url(#f3)"/><circle cx="946" cy="684" r="1.8" fill="url(#f3)"/><circle cx="394" cy="802" r="2.6" fill="url(#f3)"/><circle cx="659" cy="189" r="2.6" fill="url(#f2)"/><circle cx="802" cy="644" r="1.8" fill="url(#f1)"/><circle cx="170" cy="787" r="3.4" fill="url(#f2)"/><circle cx="830" cy="886" r="3.4" fill="url(#f1)"/><circle cx="549" cy="507" r="1.8" fill="url(#f1)"/><circle cx="153" cy="780" r="1.8" fill="url(#f1)"/><circle cx="99" cy="319" r="3.4" fill="url(#f2)"/><circle cx="784" cy="665" r="1.8" fill="url(#f3)"/><circle cx="16" cy="789" r="2.6" fill="url(#f1)"/><circle cx="682" cy="463" r="2.2" fill="url(#f1)"/><circle cx="257" cy="264" r="3.4" fill="url(#f1)"/><circle cx="335" cy="538" r="3.0" fill="url(#f1)"/><circle cx="56" cy="882" r="3.4" fill="url(#f1)"/><circle cx="421" cy="671" r="2.2" fill="url(#f1)"/><circle cx="46" cy="914" r="2.2" fill="url(#f2)"/><circle cx="10" cy="864" r="3.0" fill="url(#f2)"/><circle cx="401" cy="383" r="3.0" fill="url(#f1)"/><circle cx="234" cy="491" r="3.4" fill="url(#f1)"/><circle cx="396" cy="498" r="3.0" fill="url(#f1)"/><circle cx="756" cy="376" r="2.2" fill="url(#f1)"/><circle cx="344" cy="332" r="2.6" fill="url(#f2)"/><circle cx="536" cy="276" r="3.4" fill="url(#f2)"/><circle cx="322" cy="695" r="1.8" fill="url(#f2)"/><circle cx="787" cy="461" r="2.2" fill="url(#f2)"/><circle cx="185" cy="408" r="2.2" fill="url(#f2)"/><circle cx="37" cy="705" r="2.6" fill="url(#f1)"/><circle cx="233" cy="288" r="2.2" fill="url(#f2)"/><circle cx="521" cy="802" r="3.4" fill="url(#f2)"/><circle cx="447" cy="808" r="2.2" fill="url(#f1)"/><circle cx="353" cy="355" r="3.0" fill="url(#f2)"/><circle cx="601" cy="640" r="2.6" fill="url(#f2)"/><circle cx="483" cy="364" r="3.0" fill="url(#f3)"/><circle cx="128" cy="738" r="2.6" fill="url(#f3)"/><circle cx="857" cy="645" r="2.6" fill="url(#f3)"/><circle cx="237" cy="662" r="2.2" fill="url(#f1)"/><circle cx="831" cy="282" r="3.4" fill="url(#f1)"/><circle cx="518" cy="397" r="3.0" fill="url(#f1)"/><circle cx="627" cy="630" r="2.6" fill="url(#f1)"/><circle cx="374" cy="253" r="2.2" fill="url(#f1)"/><circle cx="308" cy="704" r="1.8" fill="url(#f1)"/><circle cx="537" cy="469" r="3.4" fill="url(#f2)"/><circle cx="187" cy="748" r="1.8" fill="url(#f1)"/><circle cx="278" cy="825" r="3.0" fill="url(#f2)"/><circle cx="341" cy="846" r="3.0" fill="url(#f3)"/><circle cx="841" cy="860" r="2.2" fill="url(#f2)"/><circle cx="171" cy="473" r="2.6" fill="url(#f2)"/><circle cx="28" cy="736" r="3.0" fill="url(#f1)"/><circle cx="952" cy="499" r="1.8" fill="url(#f1)"/><circle cx="280" cy="398" r="3.4" fill="url(#f3)"/><circle cx="212" cy="716" r="3.0" fill="url(#f1)"/><circle cx="581" cy="523" r="2.6" fill="url(#f1)"/><circle cx="365" cy="217" r="2.6" fill="url(#f3)"/><circle cx="609" cy="327" r="2.2" fill="url(#f3)"/><circle cx="476" cy="593" r="3.0" fill="url(#f3)"/><circle cx="653" cy="459" r="1.8" fill="url(#f1)"/><circle cx="795" cy="793" r="2.6" fill="url(#f1)"/><circle cx="834" cy="644" r="1.8" fill="url(#f1)"/><circle cx="650" cy="215" r="2.6" fill="url(#f1)"/><circle cx="741" cy="456" r="1.8" fill="url(#f2)"/><circle cx="663" cy="494" r="3.4" fill="url(#f1)"/><circle cx="271" cy="256" r="3.0" fill="url(#f2)"/><circle cx="886" cy="727" r="3.0" fill="url(#f3)"/><circle cx="55" cy="732" r="3.0" fill="url(#f3)"/><circle cx="489" cy="912" r="2.2" fill="url(#f2)"/><circle cx="726" cy="220" r="3.4" fill="url(#f2)"/><circle cx="169" cy="314" r="2.2" fill="url(#f3)"/><circle cx="251" cy="940" r="2.2" fill="url(#f2)"/><circle cx="333" cy="258" r="2.6" fill="url(#f1)"/><circle cx="133" cy="739" r="3.0" fill="url(#f1)"/><circle cx="25" cy="254" r="3.4" fill="url(#gw)"/><circle cx="59" cy="261" r="4.4" fill="url(#gw)"/><circle cx="436" cy="257" r="4.8" fill="url(#gw)"/><circle cx="432" cy="215" r="4.4" fill="url(#go)"/><circle cx="215" cy="326" r="4.1" fill="url(#gw)"/><circle cx="186" cy="334" r="2.7" fill="url(#gy)"/><circle cx="177" cy="327" r="3.4" fill="url(#go)"/><circle cx="37.5" cy="320" r="4.1" fill="url(#go)"/><circle cx="109" cy="394" r="3.4" fill="url(#gr)"/><circle cx="47.6" cy="413" r="2.7" fill="url(#gr)"/><circle cx="31" cy="407" r="2.7" fill="url(#gr)"/><circle cx="11" cy="439" r="5.1" fill="url(#go)"/><circle cx="6" cy="429" r="3.7" fill="url(#go)"/><circle cx="196" cy="381" r="3.4" fill="url(#gd)"/><circle cx="208" cy="413" r="3.4" fill="url(#go)"/><circle cx="246" cy="440" r="3.7" fill="url(#gd)"/><circle cx="305" cy="482" r="3.7" fill="url(#gw)"/><circle cx="359" cy="489" r="5.1" fill="url(#gw)"/><circle cx="176" cy="494" r="4.1" fill="url(#gy)"/><circle cx="22" cy="544" r="7.6" fill="url(#gdy2)"/><circle cx="56" cy="565" r="3.4" fill="url(#gd)"/><circle cx="405" cy="543" r="3.7" fill="url(#gw)"/><circle cx="400" cy="529" r="3.7" fill="url(#gd)"/><circle cx="387" cy="450" r="3.4" fill="url(#gd)"/><circle cx="430" cy="307" r="3.4" fill="url(#gd)"/><circle cx="459" cy="333" r="3.1" fill="url(#gw)"/><circle cx="472" cy="385" r="2.7" fill="url(#gd)"/><circle cx="240" cy="306" r="2.5" fill="url(#gr)"/><circle cx="78" cy="503" r="3.1" fill="url(#go)"/><circle cx="56" cy="486" r="3.4" fill="url(#gd)"/><circle cx="355" cy="269" r="2.7" fill="url(#gd)"/><circle cx="890.7" cy="244.9" r="10.2" fill="url(#gbg)"/><circle cx="776.5" cy="328" r="5.1" fill="url(#gw)"/><circle cx="870" cy="343.7" r="4.8" fill="url(#gy)"/><circle cx="699.9" cy="378.4" r="6.1" fill="url(#gy)"/><circle cx="518.4" cy="428" r="4.1" fill="url(#gw)"/><circle cx="540.5" cy="490.5" r="3.4" fill="url(#gw)"/><circle cx="880.6" cy="444" r="3.7" fill="url(#go)"/><circle cx="913.7" cy="530" r="3.4" fill="url(#gw)"/><circle cx="747" cy="202" r="4.1" fill="url(#go)"/><circle cx="525.6" cy="399" r="3.4" fill="url(#go)"/><circle cx="935" cy="437" r="3.4" fill="url(#gd)"/><circle cx="554" cy="556" r="2.7" fill="url(#gw)"/><circle cx="907.6" cy="519" r="3.4" fill="url(#gd)"/><circle cx="832" cy="539" r="3.1" fill="url(#gy)"/><circle cx="792.7" cy="347" r="2.4" fill="url(#gr)"/><circle cx="823.7" cy="363.5" r="2.7" fill="url(#gd)"/><circle cx="168.6" cy="653" r="4.1" fill="url(#go)"/><circle cx="153.3" cy="816" r="4.1" fill="url(#gw)"/><circle cx="307.4" cy="832" r="4.1" fill="url(#gw)"/><circle cx="447.8" cy="813" r="4.8" fill="url(#gw)"/><circle cx="93.6" cy="883.4" r="4.8" fill="url(#go)"/><circle cx="123.8" cy="896" r="4.1" fill="url(#gr)"/><circle cx="189.6" cy="941" r="4.1" fill="url(#go)"/><circle cx="94.8" cy="966.5" r="4.4" fill="url(#gw)"/><circle cx="363" cy="628.4" r="3.4" fill="url(#gr)"/><circle cx="381" cy="594" r="4.4" fill="url(#gd)"/><circle cx="432.4" cy="846" r="4.1" fill="url(#go)"/><circle cx="370" cy="745" r="2.7" fill="url(#gr)"/><circle cx="322.7" cy="753.5" r="3.7" fill="url(#gd)"/><circle cx="326.7" cy="726.5" r="3.7" fill="url(#gd)"/><circle cx="66.6" cy="863.6" r="5.1" fill="url(#gd)"/><circle cx="452.6" cy="835" r="2.7" fill="url(#gr)"/><circle cx="395" cy="773.6" r="3.4" fill="url(#gd)"/><circle cx="203.7" cy="880.5" r="2.4" fill="url(#gr)"/><circle cx="9.7" cy="768.4" r="3.1" fill="url(#go)"/><circle cx="291" cy="786" r="2.0" fill="url(#gr)"/><circle cx="435.6" cy="951" r="3.7" fill="url(#gd)"/><circle cx="931.8" cy="584.9" r="4.4" fill="url(#gw)"/><circle cx="935" cy="593" r="2.4" fill="url(#gr)"/><circle cx="647.4" cy="597.4" r="4.1" fill="url(#gw)"/><circle cx="716.8" cy="717.6" r="3.4" fill="url(#gr)"/><circle cx="625.3" cy="687.3" r="2.7" fill="url(#gr)"/><circle cx="686.6" cy="900.7" r="5.1" fill="url(#gr)"/><circle cx="712" cy="914.8" r="4.1" fill="url(#gw)"/><circle cx="504.2" cy="885.8" r="3.7" fill="url(#gw)"/><circle cx="735.4" cy="810.3" r="3.4" fill="url(#gw)"/><circle cx="793.5" cy="680" r="3.4" fill="url(#gw)"/><circle cx="852.8" cy="742.6" r="3.7" fill="url(#go)"/><circle cx="899.6" cy="867.6" r="3.4" fill="url(#gw)"/><circle cx="950" cy="888.6" r="5.1" fill="url(#gw)"/><circle cx="797.5" cy="613.5" r="5.1" fill="url(#go)"/><circle cx="930.2" cy="675" r="4.4" fill="url(#gd)"/><circle cx="731" cy="935" r="4.4" fill="url(#gd)"/><circle cx="883.4" cy="662" r="2.7" fill="url(#gd)"/><circle cx="623.2" cy="640.5" r="2.7" fill="url(#gd)"/><circle cx="730" cy="652" r="3.1" fill="url(#gd)"/><circle cx="564.7" cy="778.5" r="3.7" fill="url(#gd)"/><circle cx="498.9" cy="288.3" r="3.1" fill="url(#gdy)"/><circle cx="535.5" cy="378.6" r="3.1" fill="url(#gg)"/><circle cx="425.5" cy="381" r="3.1" fill="url(#gp)"/><circle cx="629.4" cy="322" r="3.4" fill="url(#gdo)"/><circle cx="592.3" cy="263" r="3.1" fill="url(#gdo)"/><circle cx="551.4" cy="408.7" r="3.1" fill="url(#gdo)"/><circle cx="617.4" cy="403.9" r="3.1" fill="url(#gdy)"/><circle cx="343.6" cy="343.7" r="3.1" fill="url(#gdo)"/><circle cx="470.7" cy="212.5" r="2.4" fill="url(#go)"/><circle cx="568.7" cy="282.3" r="2.7" fill="url(#gdo)"/><circle cx="545.9" cy="284.7" r="2.7" fill="url(#gg)"/><circle cx="737.5" cy="214.4" r="2.4" fill="url(#gr)"/><circle cx="832.6" cy="224.5" r="3.1" fill="url(#gp)"/><circle cx="835" cy="238.5" r="3.1" fill="url(#gdy)"/><circle cx="879.5" cy="231.7" r="2.0" fill="url(#gr)"/><circle cx="804.9" cy="279.9" r="3.1" fill="url(#go)"/><circle cx="837.4" cy="282.3" r="3.4" fill="url(#gdo)"/><circle cx="809.7" cy="324.4" r="3.4" fill="url(#gdy)"/><circle cx="812.1" cy="355.2" r="3.1" fill="url(#gg)"/><circle cx="832.6" cy="321.5" r="2.7" fill="url(#gg)"/><circle cx="763.3" cy="366.5" r="3.1" fill="url(#gdo)"/><circle cx="774.8" cy="376.2" r="3.1" fill="url(#gp)"/><circle cx="904.1" cy="363.7" r="3.1" fill="url(#gdo)"/><circle cx="912.7" cy="367.7" r="3.1" fill="url(#gdy)"/><circle cx="907.2" cy="275.1" r="2.7" fill="url(#gg)"/><circle cx="863.9" cy="268.6" r="2.7" fill="url(#gg)"/><circle cx="668.4" cy="190.3" r="3.1" fill="url(#gdo)"/><circle cx="719.4" cy="254.6" r="3.1" fill="url(#gdy)"/><circle cx="700.9" cy="254.1" r="2.0" fill="url(#gr)"/><circle cx="949.3" cy="371.4" r="3.1" fill="url(#go)"/><circle cx="206.3" cy="335.9" r="2.7" fill="url(#go)"/><circle cx="62.5" cy="327" r="2.7" fill="url(#go)"/><circle cx="68.5" cy="303.9" r="2.7" fill="url(#go)"/><circle cx="160.5" cy="282.2" r="3.1" fill="url(#go)"/><circle cx="117.2" cy="245.2" r="2.7" fill="url(#gp)"/><circle cx="146.1" cy="256.5" r="2.7" fill="url(#gdo)"/><circle cx="28.1" cy="291.9" r="3.1" fill="url(#gp)"/><circle cx="91.9" cy="350.4" r="3.1" fill="url(#gdy)"/><circle cx="29.3" cy="355.2" r="2.7" fill="url(#gdo)"/><circle cx="69" cy="382.2" r="2.7" fill="url(#go)"/><circle cx="194.2" cy="368.4" r="3.1" fill="url(#gdy)"/><circle cx="196.6" cy="408.2" r="2.7" fill="url(#go)"/><circle cx="94.3" cy="429.8" r="2.7" fill="url(#gdy)"/><circle cx="332.7" cy="391.3" r="3.1" fill="url(#gdo)"/><circle cx="291.7" cy="386.5" r="3.1" fill="url(#gdy)"/><circle cx="303.8" cy="367.2" r="2.7" fill="url(#gdy)"/><circle cx="324.2" cy="351.6" r="2.7" fill="url(#gg)"/><circle cx="288.6" cy="286.6" r="2.7" fill="url(#gp)"/><circle cx="254.4" cy="301" r="2.7" fill="url(#gp)"/><circle cx="209.9" cy="372.8" r="2.7" fill="url(#gdo)"/><circle cx="223.8" cy="372.8" r="2.7" fill="url(#gdy)"/><circle cx="234.7" cy="372" r="2.7" fill="url(#gg)"/><circle cx="167.3" cy="428.6" r="3.1" fill="url(#gdo)"/><circle cx="126.8" cy="452.7" r="2.7" fill="url(#gp)"/><circle cx="336.3" cy="454" r="2.7" fill="url(#gg)"/><circle cx="9.7" cy="510.6" r="2.7" fill="url(#go)"/><circle cx="273.1" cy="472.8" r="2.7" fill="url(#go)"/><circle cx="237.3" cy="479.8" r="2.7" fill="url(#gdo)"/><circle cx="112.1" cy="488.4" r="2.7" fill="url(#gp)"/><circle cx="115.1" cy="500" r="2.7" fill="url(#gdo)"/><circle cx="71.4" cy="530.4" r="2.7" fill="url(#gg)"/><circle cx="59.1" cy="545.7" r="2.4" fill="url(#gr)"/><circle cx="27.5" cy="561.7" r="2.7" fill="url(#gp)"/><circle cx="12.6" cy="559.3" r="2.7" fill="url(#gg)"/><circle cx="67.7" cy="600.7" r="3.1" fill="url(#gdo)"/><circle cx="55.9" cy="629.1" r="3.1" fill="url(#gdy)"/><circle cx="53.4" cy="640.7" r="3.1" fill="url(#gdo)"/><circle cx="241.8" cy="581" r="3.7" fill="url(#gdy)"/><circle cx="201.5" cy="616.8" r="3.1" fill="url(#gp)"/><circle cx="185" cy="623" r="3.1" fill="url(#gg)"/><circle cx="173.9" cy="616.3" r="2.7" fill="url(#gdo)"/><circle cx="289.2" cy="632.3" r="3.1" fill="url(#gg)"/><circle cx="318.8" cy="658.8" r="2.7" fill="url(#gg)"/><circle cx="336.1" cy="658.8" r="2.7" fill="url(#gdy)"/><circle cx="204.5" cy="652.6" r="2.7" fill="url(#gdy)"/><circle cx="171.4" cy="679" r="3.1" fill="url(#gdy)"/><circle cx="62" cy="677.3" r="2.7" fill="url(#gdo)"/><circle cx="301.5" cy="668.6" r="2.7" fill="url(#gg)"/><circle cx="102.3" cy="617.3" r="2.7" fill="url(#gp)"/><circle cx="260.8" cy="606.9" r="2.7" fill="url(#gdy)"/><circle cx="257.1" cy="614.3" r="2.7" fill="url(#gg)"/><circle cx="278.8" cy="618.8" r="2.7" fill="url(#gg)"/><circle cx="372.8" cy="485.3" r="3.1" fill="url(#gp)"/><circle cx="433.3" cy="505" r="3.1" fill="url(#gdo)"/><circle cx="522.2" cy="576" r="2.7" fill="url(#gr)"/><circle cx="530.1" cy="587" r="3.1" fill="url(#gdo)"/><circle cx="577" cy="473.5" r="3.1" fill="url(#gdo)"/><circle cx="642.5" cy="503" r="2.4" fill="url(#gr)"/><circle cx="625.2" cy="497.2" r="2.7" fill="url(#gg)"/><circle cx="593.1" cy="516.2" r="2.7" fill="url(#gp)"/><circle cx="575.8" cy="521.1" r="2.7" fill="url(#gdo)"/><circle cx="566.7" cy="489.5" r="2.7" fill="url(#gdo)"/><circle cx="507.4" cy="460.6" r="2.7" fill="url(#gdo)"/><circle cx="407.9" cy="600.9" r="2.7" fill="url(#go)"/><circle cx="424" cy="422.3" r="2.7" fill="url(#gp)"/><circle cx="369.1" cy="440.9" r="2.7" fill="url(#gdo)"/><circle cx="377.5" cy="566" r="2.7" fill="url(#gdy)"/><circle cx="412.3" cy="499.6" r="2.7" fill="url(#gg)"/><circle cx="653.6" cy="529.8" r="3.4" fill="url(#gdo)"/><circle cx="606.2" cy="559.4" r="2.7" fill="url(#gdo)"/><circle cx="616.5" cy="623.6" r="2.7" fill="url(#gg)"/><circle cx="922.2" cy="586.5" r="2.2" fill="url(#gr)"/><circle cx="899.2" cy="561.8" r="3.7" fill="url(#gdo)"/><circle cx="677.8" cy="450.2" r="3.1" fill="url(#gdo)"/><circle cx="866.6" cy="500.1" r="3.1" fill="url(#gdo)"/><circle cx="865.4" cy="529.2" r="3.1" fill="url(#gdo)"/><circle cx="754.8" cy="620.6" r="2.7" fill="url(#go)"/><circle cx="896.7" cy="535.9" r="2.7" fill="url(#gdo)"/><circle cx="925.1" cy="535.4" r="2.2" fill="url(#gr)"/><circle cx="833.3" cy="465.5" r="3.1" fill="url(#gp)"/><circle cx="703.7" cy="498.1" r="2.7" fill="url(#gdo)"/><circle cx="944.9" cy="468.5" r="2.7" fill="url(#gdy)"/><circle cx="904.1" cy="480.4" r="2.7" fill="url(#gp)"/><circle cx="731.8" cy="440.1" r="2.7" fill="url(#gp)"/><circle cx="780.7" cy="553.2" r="2.7" fill="url(#gdy)"/><circle cx="867.1" cy="596.4" r="2.7" fill="url(#gp)"/><circle cx="904.1" cy="608.7" r="2.7" fill="url(#gdy)"/><circle cx="726.4" cy="612.9" r="2.7" fill="url(#gdy)"/><circle cx="761" cy="643.3" r="3.4" fill="url(#gdo)"/><circle cx="798.7" cy="541.6" r="2.7" fill="url(#gdy)"/><circle cx="203.3" cy="910.2" r="2.7" fill="url(#gdy)"/><circle cx="175" cy="925" r="2.7" fill="url(#go)"/><circle cx="117.8" cy="716.3" r="3.1" fill="url(#go)"/><circle cx="61.2" cy="705.7" r="3.1" fill="url(#gdy)"/><circle cx="135.5" cy="739.2" r="2.7" fill="url(#gdo)"/><circle cx="19.7" cy="881" r="3.1" fill="url(#gdy)"/><circle cx="19.7" cy="806.7" r="3.1" fill="url(#gdo)"/><circle cx="209" cy="797.8" r="2.7" fill="url(#gp)"/><circle cx="36.9" cy="941.1" r="3.1" fill="url(#gdo)"/><circle cx="127" cy="923.9" r="2.7" fill="url(#gg)"/><circle cx="151.3" cy="791.5" r="2.7" fill="url(#gdo)"/><circle cx="314.8" cy="856.7" r="2.7" fill="url(#gp)"/><circle cx="334.3" cy="854.4" r="3.4" fill="url(#gdy)"/><circle cx="62" cy="730" r="2.7" fill="url(#gg)"/><circle cx="143.5" cy="942.5" r="2.7" fill="url(#gdo)"/><circle cx="318.6" cy="785.8" r="2.7" fill="url(#gg)"/><circle cx="471" cy="838.1" r="3.1" fill="url(#gp)"/><circle cx="418.3" cy="839.2" r="3.1" fill="url(#gdo)"/><circle cx="508.8" cy="856" r="3.1" fill="url(#gdy)"/><circle cx="468.3" cy="712.6" r="3.1" fill="url(#gdy)"/><circle cx="450.4" cy="703.5" r="2.7" fill="url(#gdy)"/><circle cx="443" cy="696.7" r="2.4" fill="url(#go)"/><circle cx="426.1" cy="673.8" r="2.7" fill="url(#gg)"/><circle cx="388.3" cy="710.9" r="2.7" fill="url(#gdo)"/><circle cx="511.5" cy="771" r="2.7" fill="url(#gdo)"/><circle cx="641.4" cy="716" r="2.4" fill="url(#go)"/><circle cx="602.6" cy="722.7" r="2.7" fill="url(#gg)"/><circle cx="618.5" cy="809.8" r="2.7" fill="url(#gg)"/><circle cx="631" cy="809.8" r="2.7" fill="url(#gdo)"/><circle cx="468.3" cy="792.9" r="2.7" fill="url(#gdo)"/><circle cx="490.2" cy="827.3" r="2.7" fill="url(#gdo)"/><circle cx="369.7" cy="912.7" r="2.7" fill="url(#gdo)"/><circle cx="383.9" cy="912.7" r="2.7" fill="url(#gdy)"/><circle cx="647.8" cy="926.9" r="2.7" fill="url(#gg)"/><circle cx="510.5" cy="690.6" r="3.4" fill="url(#gdy)"/><circle cx="592.5" cy="711.6" r="2.7" fill="url(#gdo)"/><circle cx="660.9" cy="726.7" r="2.7" fill="url(#go)"/><circle cx="641.7" cy="715.2" r="2.0" fill="url(#gr)"/><circle cx="802.9" cy="753" r="3.1" fill="url(#gdy)"/><circle cx="801.2" cy="727" r="2.7" fill="url(#gg)"/><circle cx="899" cy="745.2" r="2.7" fill="url(#gp)"/><circle cx="877.8" cy="788.4" r="2.7" fill="url(#gg)"/><circle cx="796.2" cy="824.8" r="2.7" fill="url(#gg)"/><circle cx="810.3" cy="844" r="2.7" fill="url(#gg)"/><circle cx="793.5" cy="860.9" r="3.1" fill="url(#gdy)"/><circle cx="812" cy="872" r="2.0" fill="url(#gr)"/><circle cx="695.6" cy="869.3" r="2.7" fill="url(#gdy)"/><circle cx="678.1" cy="693" r="2.7" fill="url(#gg)"/><circle cx="948.6" cy="768.2" r="2.7" fill="url(#gdy)"/><circle cx="878.8" cy="936.8" r="3.1" fill="url(#gp)"/><circle cx="898" cy="952" r="2.7" fill="url(#gdy)"/><circle cx="647.4" cy="926.7" r="2.7" fill="url(#gg)"/><circle cx="804.6" cy="817" r="2.7" fill="url(#gdo)"/><circle cx="760.7" cy="644" r="3.4" fill="url(#gdo)"/><circle cx="837.3" cy="695.6" r="2.7" fill="url(#gdo)"/><circle cx="938.5" cy="697.3" r="2.7" fill="url(#gdo)"/><ellipse cx="230.7" cy="657.9" rx="14" ry="30" fill="url(#gd)" opacity="0.55" transform="rotate(12 230.7 657.9)"/><ellipse cx="230.7" cy="657.9" rx="4" ry="7" fill="url(#go)" transform="rotate(12 230.7 657.9)"/><circle cx="890.7" cy="244.9" r="2.4" fill="#e0608a"/></g></svg>
</div>
<div class="a" style="left:4px;top:186px;width:336px;height:23px;background:rgba(214,217,221,0.95);border-radius:0 0 6px 0"></div>
<div class="a" style="left:4px;top:209px;width:127px;height:32px;background:rgba(214,217,221,0.95);border-radius:0 0 6px 0"></div>
<div class="t" style="left:8.61px;top:190.38px;font-size:14.78px;color:#2b3036;transform:scaleX(0.9224);transform-origin:0 0;">DP0.2 HiPS from DESC DC2 sim: gri colo…</div>
<div class="t" style="left:282.41px;top:189.97px;font-size:14.20px;color:#3f454b;transform:scaleX(0.9557);transform-origin:0 0;">FOV:6.6&#x27;</div>
<svg class="a" style="left:7px;top:212px;" width="30" height="30" viewBox="0 0 30 30"><g fill="none" stroke="#2b3036" stroke-width="1.8"><circle cx="12.6" cy="12.6" r="10.0" stroke-width="3.1"/><line x1="7.8" y1="12.6" x2="17.4" y2="12.6"/><line x1="12.6" y1="7.8" x2="12.6" y2="17.4"/><line x1="21.6" y1="21.6" x2="26.6" y2="26.6" stroke-width="3.6"/></g></svg>
<svg class="a" style="left:39px;top:212px;" width="30" height="30" viewBox="0 0 30 30"><g fill="none" stroke="#2b3036" stroke-width="1.8"><circle cx="12.6" cy="12.6" r="10.0" stroke-width="3.1"/><line x1="7.8" y1="12.6" x2="17.4" y2="12.6"/><line x1="21.6" y1="21.6" x2="26.6" y2="26.6" stroke-width="3.6"/></g></svg>
<svg class="a" style="left:71px;top:212px;" width="30" height="30" viewBox="0 0 30 30"><g fill="none" stroke="#2b3036" stroke-width="1.8"><circle cx="12.6" cy="12.6" r="10.0" stroke-width="3.1"/><path stroke="none" fill="#2b3036" d="M7.0 7.0 L11.4 8.0 L11.4 11.4 L8.0 11.4Z M18.2 7.0 L13.8 8.0 L13.8 11.4 L17.2 11.4Z M7.0 18.2 L11.4 17.2 L11.4 13.8 L8.0 13.8Z M18.2 18.2 L13.8 17.2 L13.8 13.8 L17.2 13.8Z"/><line x1="21.6" y1="21.6" x2="26.6" y2="26.6" stroke-width="3.6"/></g></svg>
<svg class="a" style="left:103px;top:212px;" width="30" height="30" viewBox="0 0 30 30"><g fill="none" stroke="#2b3036" stroke-width="1.8"><circle cx="12.6" cy="12.6" r="10.0" stroke-width="3.1"/><line x1="6.5" y1="12.6" x2="18.7" y2="12.6"/><path d="M6 12.6 L9.3 9.6 L9.3 15.6Z M19.2 12.6 L15.9 9.6 L15.9 15.6Z" fill="#2b3036" stroke="none"/><line x1="21.6" y1="21.6" x2="26.6" y2="26.6" stroke-width="3.6"/></g></svg>
<div class="a" style="left:957px;top:72px;width:956px;height:897px;border:1px solid #c8d1dd;border-radius:7px;background:#f9fafc;overflow:hidden"></div>
<div class="a" style="left:958px;top:73px;width:954px;height:43px;background:#eef1f5;border-radius:6px 6px 0 0"></div>
<div class="a" style="left:958px;top:116px;width:954px;height:1px;background:#c8d1dd"></div>
<div class="t" style="left:960.03px;top:78.00px;font-size:12.75px;color:#3a4047;transform:scaleX(1.1123);transform-origin:0 0;">dp02_dc2_catalogs.ForcedSou...</div>
<svg class="a" style="left:1171px;top:77px;" width="14" height="14" viewBox="0 0 14 14"><g stroke="#3a4047" stroke-width="1.5"><line x1="2" y1="2" x2="12" y2="12"/><line x1="12" y1="2" x2="2" y2="12"/></g></svg>
<svg class="a" style="left:1250px;top:84px;" width="20" height="20" viewBox="0 0 20 20"><g fill="none" stroke="#2b3036" stroke-width="2.4"><line x1="4.2" y1="3.5" x2="4.2" y2="16.5"/><path d="M16.5 4 L10.5 10 L16.5 16"/></g></svg>
<svg class="a" style="left:1285px;top:84px;" width="16" height="20" viewBox="0 0 16 20"><path d="M11.5 4 L5.5 10 L11.5 16" fill="none" stroke="#2b3036" stroke-width="2.4"/></svg>
<div class="a" style="left:1310px;top:79px;width:46px;height:31px;background:#f9fafc;border:1px solid #c8d1dd;border-radius:6px"></div>
<div class="t" style="left:1319.70px;top:87.21px;font-size:13.80px;color:#2b3036;transform:scaleX(0.9941);transform-origin:0 0;">1</div>
<div class="t" style="left:1361.04px;top:87.21px;font-size:13.80px;color:#3a4047;transform:scaleX(1.0134);transform-origin:0 0;">of 2</div>
<svg class="a" style="left:1393px;top:84px;" width="16" height="20" viewBox="0 0 16 20"><path d="M5 4 L11 10 L5 16" fill="none" stroke="#2b3036" stroke-width="2.4"/></svg>
<svg class="a" style="left:1424px;top:84px;" width="20" height="20" viewBox="0 0 20 20"><g fill="none" stroke="#2b3036" stroke-width="2.4"><path d="M3.5 4 L9.5 10 L3.5 16"/><line x1="15.8" y1="3.5" x2="15.8" y2="16.5"/></g></svg>
<div class="t" style="left:1450.99px;top:87.99px;font-size:13.94px;color:#3a4047;transform:scaleX(0.9626);transform-origin:0 0;">(1 - 100 of 108)</div>
<svg class="a" style="left:1595px;top:76px;" width="40" height="40" viewBox="0 0 40 40"><g fill="#2b3036">
<path d="M3.9 29.2 L16.5 29.2 L10.3 36.6Z"/>
<path d="M16 29.2 L34 29.2 L36 31.7 L16 31.7Z"/>
<rect x="22.2" y="24.5" width="4.5" height="5"/>
<path d="M19 23 L34.6 23 L32.5 25.5 L19 25.5Z"/>
<circle cx="23" cy="12.5" r="2.9"/>
</g>
<path d="M22 24.2 C17.5 24 15.8 21 16.2 18 C16.6 15 19 13.2 21.5 12.8" fill="none" stroke="#2b3036" stroke-width="3.2"/>
<g transform="rotate(-22 27.5 10.5)"><rect x="25" y="3.5" width="5" height="14" fill="none" stroke="#2b3036" stroke-width="2.2"/><rect x="25.6" y="1.6" width="3.8" height="2.4" fill="#2b3036"/></g>
<circle cx="23" cy="12.5" r="1.1" fill="#eef1f5"/></svg>
<svg class="a" style="left:1648px;top:82px;" width="26" height="26" viewBox="0 0 26 26"><path d="M3 2.5 L23 2.5 L15.5 13 L15.5 22.5 L10.5 22.5 L10.5 13Z" fill="none" stroke="#2b3036" stroke-width="2.5" stroke-linejoin="round"/><rect x="10.5" y="13" width="5" height="10" fill="#2b3036"/></svg>
<svg class="a" style="left:1685px;top:82px;" width="30" height="26" viewBox="0 0 30 26"><g fill="#2b3036"><rect x="2" y="2" width="17.5" height="3.5"/><rect x="8.5" y="2" width="4" height="20"/><rect x="15" y="9" width="12.5" height="3"/><rect x="19.5" y="9" width="3.5" height="13"/></g></svg>
<svg class="a" style="left:1725px;top:79px;" width="32" height="32" viewBox="0 0 32 32"><path d="M4 3.5 L23.5 3.5 L28.5 8.5 L28.5 26.5 Q28.5 27.5 27.5 27.5 L5 27.5 Q4 27.5 4 26.5Z" fill="none" stroke="#2b3036" stroke-width="3" stroke-linejoin="round"/><rect x="7" y="7" width="14" height="4" fill="#2b3036"/><circle cx="14.5" cy="20.3" r="3.8" fill="#2b3036"/></svg>
<svg class="a" style="left:1766px;top:79px;" width="34" height="30" viewBox="0 0 34 30"><rect x="3.5" y="2.5" width="9" height="25" rx="1.5" fill="none" stroke="#2b3036" stroke-width="2.2"/><circle cx="23" cy="16" r="7.2" fill="none" stroke="#2b3036" stroke-width="1.6"/><g stroke="#2b3036" stroke-width="1.8"><line x1="19" y1="16" x2="27" y2="16"/><line x1="23" y1="12" x2="23" y2="20"/></g></svg>
<svg class="a" style="left:1804px;top:79px;" width="32" height="32" viewBox="0 0 32 32"><circle cx="15.5" cy="15.5" r="13.3" fill="none" stroke="#2b3036" stroke-width="2.6"/><rect x="14" y="8" width="3" height="3" fill="#2b3036"/><rect x="14" y="13" width="3" height="9" fill="#2b3036"/></svg>
<svg class="a" style="left:1845px;top:80px;" width="30" height="30" viewBox="0 0 30 30"><g transform="translate(14.8,14.8)"><path d="M-3.50 -7.86 L-2.85 -11.45 L2.85 -11.45 L3.50 -7.86 L5.05 -6.96 L8.49 -8.20 L11.34 -3.25 L8.55 -0.90 L8.55 0.90 L11.34 3.25 L8.49 8.20 L5.05 6.96 L3.50 7.86 L2.85 11.45 L-2.85 11.45 L-3.50 7.86 L-5.05 6.96 L-8.49 8.20 L-11.34 3.25 L-8.55 0.90 L-8.55 -0.90 L-11.34 -3.25 L-8.49 -8.20 L-5.05 -6.96Z" fill="none" stroke="#2b3036" stroke-width="2.3" stroke-linejoin="round"/><circle r="4.1" fill="none" stroke="#2b3036" stroke-width="2.2"/></g></svg>
<svg class="a" style="left:1882px;top:81px;" width="27" height="27" viewBox="0 0 27 27"><path fill="#2b3036" d="M2 2 L10.5 2 L7.5 5 L20.5 18 L23.5 15 L23.5 23.5 L15 23.5 L18 20.5 L5 7.5 L2 10.5Z"/></svg>
<div class="a" style="left:958px;top:208px;width:954px;height:757px;overflow:hidden">
<div class="a" style="left:0px;top:1px;width:935px;height:23px;background:#fcdcb6"></div>
<div class="a" style="left:0px;top:24px;width:826px;height:1px;background:#d5dce6"></div>
<div class="a" style="left:6px;top:4px;width:18px;height:17px;border:1px solid #c3ccd8;border-radius:4px;background:#fbfcfd"></div>
<div class="t c" style="left:-86.00px;top:6.45px">67.4579634</div>
<div class="t c" style="left:4.00px;top:6.45px">-44.080243</div>
<div class="t c" style="left:155.00px;top:6.45px">1252220598734556212</div>
<div class="t c" style="left:235.50px;top:6.45px">497049050</div>
<div class="t" style="left:442.50px;top:6.45px;font-size:14px;color:#2b3036">i</div>
<div class="t c" style="left:404.00px;top:6.45px">752.7259636</div>
<div class="t c" style="left:513.00px;top:6.45px">404.0286942</div>
<div class="t c" style="left:622.50px;top:6.45px">60309.2564982</div>
<div class="a" style="left:0px;top:49px;width:826px;height:1px;background:#d5dce6"></div>
<div class="a" style="left:6px;top:29px;width:18px;height:17px;border:1px solid #c3ccd8;border-radius:4px;background:#fbfcfd"></div>
<div class="t c" style="left:-86.00px;top:31.45px">67.4579634</div>
<div class="t c" style="left:4.00px;top:31.45px">-44.080243</div>
<div class="t c" style="left:155.00px;top:31.45px">1252220598734556212</div>
<div class="t c" style="left:235.50px;top:31.45px">184882122</div>
<div class="t" style="left:442.50px;top:31.45px;font-size:14px;color:#2b3036">i</div>
<div class="t c" style="left:404.00px;top:31.45px">-223.7210304</div>
<div class="t c" style="left:513.00px;top:31.45px">164.9037338</div>
<div class="t c" style="left:622.50px;top:31.45px">59824.3751182</div>
<div class="a" style="left:0px;top:74px;width:826px;height:1px;background:#d5dce6"></div>
<div class="a" style="left:6px;top:54px;width:18px;height:17px;border:1px solid #c3ccd8;border-radius:4px;background:#fbfcfd"></div>
<div class="t c" style="left:-86.00px;top:56.45px">67.4579634</div>
<div class="t c" style="left:4.00px;top:56.45px">-44.080243</div>
<div class="t c" style="left:155.00px;top:56.45px">1252220598734556212</div>
<div class="t c" style="left:235.50px;top:56.45px">458649125</div>
<div class="t" style="left:442.50px;top:56.45px;font-size:14px;color:#2b3036">i</div>
<div class="t c" style="left:404.00px;top:56.45px">-576.9286569</div>
<div class="t c" style="left:513.00px;top:56.45px">277.8657591</div>
<div class="t c" style="left:622.50px;top:56.45px">60242.2969472</div>
<div class="a" style="left:0px;top:99px;width:826px;height:1px;background:#d5dce6"></div>
<div class="a" style="left:6px;top:79px;width:18px;height:17px;border:1px solid #c3ccd8;border-radius:4px;background:#fbfcfd"></div>
<div class="t c" style="left:-86.00px;top:81.45px">67.4579634</div>
<div class="t c" style="left:4.00px;top:81.45px">-44.080243</div>
<div class="t c" style="left:155.00px;top:81.45px">1252220598734556212</div>
<div class="t c" style="left:235.50px;top:81.45px">1000799135</div>
<div class="t" style="left:442.50px;top:81.45px;font-size:14px;color:#2b3036">i</div>
<div class="t c" style="left:404.00px;top:81.45px">-800.3556738</div>
<div class="t c" style="left:513.00px;top:81.45px">365.9952542</div>
<div class="t c" style="left:622.50px;top:81.45px">61059.0803902</div>
<div class="a" style="left:0px;top:124px;width:826px;height:1px;background:#d5dce6"></div>
<div class="a" style="left:6px;top:104px;width:18px;height:17px;border:1px solid #c3ccd8;border-radius:4px;background:#fbfcfd"></div>
<div class="t c" style="left:-86.00px;top:106.45px">67.4579634</div>
<div class="t c" style="left:4.00px;top:106.45px">-44.080243</div>
<div class="t c" style="left:155.00px;top:106.45px">1252220598734556212</div>
<div class="t c" style="left:235.50px;top:106.45px">953630088</div>
<div class="t" style="left:442.50px;top:106.45px;font-size:14px;color:#2b3036">i</div>
<div class="t c" style="left:404.00px;top:106.45px">4225.6727278</div>
<div class="t c" style="left:513.00px;top:106.45px">276.2668365</div>
<div class="t c" style="left:622.50px;top:106.45px">60976.1571632</div>
<div class="a" style="left:0px;top:149px;width:826px;height:1px;background:#d5dce6"></div>
<div class="a" style="left:6px;top:129px;width:18px;height:17px;border:1px solid #c3ccd8;border-radius:4px;background:#fbfcfd"></div>
<div class="t c" style="left:-86.00px;top:131.45px">67.4579634</div>
<div class="t c" style="left:4.00px;top:131.45px">-44.080243</div>
<div class="t c" style="left:155.00px;top:131.45px">1252220598734556212</div>
<div class="t c" style="left:235.50px;top:131.45px">1211915040</div>
<div class="t" style="left:442.50px;top:131.45px;font-size:14px;color:#2b3036">i</div>
<div class="t c" style="left:404.00px;top:131.45px">11.4493183</div>
<div class="t c" style="left:513.00px;top:131.45px">275.0945613</div>
<div class="t c" style="left:622.50px;top:131.45px">61364.1769852</div>
<div class="a" style="left:0px;top:174px;width:826px;height:1px;background:#d5dce6"></div>
<div class="a" style="left:6px;top:154px;width:18px;height:17px;border:1px solid #c3ccd8;border-radius:4px;background:#fbfcfd"></div>
<div class="t c" style="left:-86.00px;top:156.45px">67.4579634</div>
<div class="t c" style="left:4.00px;top:156.45px">-44.080243</div>
<div class="t c" style="left:155.00px;top:156.45px">1252220598734556212</div>
<div class="t c" style="left:235.50px;top:156.45px">427696187</div>
<div class="t" style="left:442.50px;top:156.45px;font-size:14px;color:#2b3036">i</div>
<div class="t c" style="left:404.00px;top:156.45px">-546.9985643</div>
<div class="t c" style="left:513.00px;top:156.45px">348.495035</div>
<div class="t c" style="left:622.50px;top:156.45px">60192.3737602</div>
<div class="a" style="left:0px;top:199px;width:826px;height:1px;background:#d5dce6"></div>
<div class="a" style="left:6px;top:179px;width:18px;height:17px;border:1px solid #c3ccd8;border-radius:4px;background:#fbfcfd"></div>
<div class="t c" style="left:-86.00px;top:181.45px">67.4579634</div>
<div class="t c" style="left:4.00px;top:181.45px">-44.080243</div>
<div class="t c" style="left:155.00px;top:181.45px">1252220598734556212</div>
<div class="t c" style="left:235.50px;top:181.45px">965417140</div>
<div class="t" style="left:442.50px;top:181.45px;font-size:14px;color:#2b3036">i</div>
<div class="t c" style="left:404.00px;top:181.45px">1725.8921319</div>
<div class="t c" style="left:513.00px;top:181.45px">259.4860247</div>
<div class="t c" style="left:622.50px;top:181.45px">61000.0975272</div>
<div class="a" style="left:0px;top:224px;width:826px;height:1px;background:#d5dce6"></div>
<div class="a" style="left:6px;top:204px;width:18px;height:17px;border:1px solid #c3ccd8;border-radius:4px;background:#fbfcfd"></div>
<div class="t c" style="left:-86.00px;top:206.45px">67.4579634</div>
<div class="t c" style="left:4.00px;top:206.45px">-44.080243</div>
<div class="t c" style="left:155.00px;top:206.45px">1252220598734556212</div>
<div class="t c" style="left:235.50px;top:206.45px">752188083</div>
<div class="t" style="left:442.50px;top:206.45px;font-size:14px;color:#2b3036">i</div>
<div class="t c" style="left:622.50px;top:206.45px">60691.1584522</div>
<div class="a" style="left:0px;top:249px;width:826px;height:1px;background:#d5dce6"></div>
<div class="a" style="left:6px;top:229px;width:18px;height:17px;border:1px solid #c3ccd8;border-radius:4px;background:#fbfcfd"></div>
<div class="t c" style="left:-86.00px;top:231.45px">67.4579634</div>
<div class="t c" style="left:4.00px;top:231.45px">-44.080243</div>
<div class="t c" style="left:155.00px;top:231.45px">1252220598734556212</div>
<div class="t c" style="left:235.50px;top:231.45px">930533080</div>
<div class="t" style="left:442.50px;top:231.45px;font-size:14px;color:#2b3036">i</div>
<div class="t c" style="left:404.00px;top:231.45px">5811.3703485</div>
<div class="t c" style="left:513.00px;top:231.45px">200.9759732</div>
<div class="t c" style="left:622.50px;top:231.45px">60944.2932122</div>
<div class="a" style="left:0px;top:274px;width:826px;height:1px;background:#d5dce6"></div>
<div class="a" style="left:6px;top:254px;width:18px;height:17px;border:1px solid #c3ccd8;border-radius:4px;background:#fbfcfd"></div>
<div class="t c" style="left:-86.00px;top:256.45px">67.4579634</div>
<div class="t c" style="left:4.00px;top:256.45px">-44.080243</div>
<div class="t c" style="left:155.00px;top:256.45px">1252220598734556212</div>
<div class="t c" style="left:235.50px;top:256.45px">1172733110</div>
<div class="t" style="left:442.50px;top:256.45px;font-size:14px;color:#2b3036">i</div>
<div class="t c" style="left:404.00px;top:256.45px">-107.8691453</div>
<div class="t c" style="left:513.00px;top:256.45px">260.8346544</div>
<div class="t c" style="left:622.50px;top:256.45px">61304.2710572</div>
<div class="a" style="left:0px;top:299px;width:826px;height:1px;background:#d5dce6"></div>
<div class="a" style="left:6px;top:279px;width:18px;height:17px;border:1px solid #c3ccd8;border-radius:4px;background:#fbfcfd"></div>
<div class="t c" style="left:-86.00px;top:281.45px">67.4579634</div>
<div class="t c" style="left:4.00px;top:281.45px">-44.080243</div>
<div class="t c" style="left:155.00px;top:281.45px">1252220598734556212</div>
<div class="t c" style="left:235.50px;top:281.45px">679501002</div>
<div class="t" style="left:442.50px;top:281.45px;font-size:14px;color:#2b3036">i</div>
<div class="t c" style="left:404.00px;top:281.45px">-127.5654993</div>
<div class="t c" style="left:513.00px;top:281.45px">200.2870743</div>
<div class="t c" style="left:622.50px;top:281.45px">60587.2511712</div>
<div class="a" style="left:0px;top:324px;width:826px;height:1px;background:#d5dce6"></div>
<div class="a" style="left:6px;top:304px;width:18px;height:17px;border:1px solid #c3ccd8;border-radius:4px;background:#fbfcfd"></div>
<div class="t c" style="left:-86.00px;top:306.45px">67.4579634</div>
<div class="t c" style="left:4.00px;top:306.45px">-44.080243</div>
<div class="t c" style="left:155.00px;top:306.45px">1252220598734556212</div>
<div class="t c" style="left:235.50px;top:306.45px">1165955158</div>
<div class="t" style="left:442.50px;top:306.45px;font-size:14px;color:#2b3036">i</div>
<div class="t c" style="left:404.00px;top:306.45px">-258.8291972</div>
<div class="t c" style="left:513.00px;top:306.45px">317.1087756</div>
<div class="t c" style="left:622.50px;top:306.45px">61286.3839512</div>
<div class="a" style="left:0px;top:349px;width:826px;height:1px;background:#d5dce6"></div>
<div class="a" style="left:6px;top:329px;width:18px;height:17px;border:1px solid #c3ccd8;border-radius:4px;background:#fbfcfd"></div>
<div class="t c" style="left:-86.00px;top:331.45px">67.4579634</div>
<div class="t c" style="left:4.00px;top:331.45px">-44.080243</div>
<div class="t c" style="left:155.00px;top:331.45px">1252220598734556212</div>
<div class="t c" style="left:235.50px;top:331.45px">1209123017</div>
<div class="t" style="left:442.50px;top:331.45px;font-size:14px;color:#2b3036">i</div>
<div class="t c" style="left:404.00px;top:331.45px">-340.9793116</div>
<div class="t c" style="left:513.00px;top:331.45px">238.2147067</div>
<div class="t c" style="left:622.50px;top:331.45px">61360.1830642</div>
<div class="a" style="left:0px;top:374px;width:826px;height:1px;background:#d5dce6"></div>
<div class="a" style="left:6px;top:354px;width:18px;height:17px;border:1px solid #c3ccd8;border-radius:4px;background:#fbfcfd"></div>
<div class="t c" style="left:-86.00px;top:356.45px">67.4579634</div>
<div class="t c" style="left:4.00px;top:356.45px">-44.080243</div>
<div class="t c" style="left:155.00px;top:356.45px">1252220598734556212</div>
<div class="t c" style="left:235.50px;top:356.45px">924069017</div>
<div class="t" style="left:442.50px;top:356.45px;font-size:14px;color:#2b3036">i</div>
<div class="t c" style="left:404.00px;top:356.45px">2540.9830397</div>
<div class="t c" style="left:513.00px;top:356.45px">267.4048022</div>
<div class="t c" style="left:622.50px;top:356.45px">60937.2561262</div>
<div class="a" style="left:0px;top:399px;width:826px;height:1px;background:#d5dce6"></div>
<div class="a" style="left:6px;top:379px;width:18px;height:17px;border:1px solid #c3ccd8;border-radius:4px;background:#fbfcfd"></div>
<div class="t c" style="left:-86.00px;top:381.45px">67.4579634</div>
<div class="t c" style="left:4.00px;top:381.45px">-44.080243</div>
<div class="t c" style="left:155.00px;top:381.45px">1252220598734556212</div>
<div class="t c" style="left:235.50px;top:381.45px">446090045</div>
<div class="t" style="left:442.50px;top:381.45px;font-size:14px;color:#2b3036">i</div>
<div class="t c" style="left:404.00px;top:381.45px">-438.1933252</div>
<div class="t c" style="left:513.00px;top:381.45px">305.5726579</div>
<div class="t c" style="left:622.50px;top:381.45px">60221.3282892</div>
<div class="a" style="left:0px;top:424px;width:826px;height:1px;background:#d5dce6"></div>
<div class="a" style="left:6px;top:404px;width:18px;height:17px;border:1px solid #c3ccd8;border-radius:4px;background:#fbfcfd"></div>
<div class="t c" style="left:-86.00px;top:406.45px">67.4579634</div>
<div class="t c" style="left:4.00px;top:406.45px">-44.080243</div>
<div class="t c" style="left:155.00px;top:406.45px">1252220598734556212</div>
<div class="t c" style="left:235.50px;top:406.45px">479699040</div>
<div class="t" style="left:442.50px;top:406.45px;font-size:14px;color:#2b3036">i</div>
<div class="t c" style="left:404.00px;top:406.45px">-1492.8021323</div>
<div class="t c" style="left:513.00px;top:406.45px">395.7781356</div>
<div class="t c" style="left:622.50px;top:406.45px">60279.2633182</div>
<div class="a" style="left:0px;top:449px;width:826px;height:1px;background:#d5dce6"></div>
<div class="a" style="left:6px;top:429px;width:18px;height:17px;border:1px solid #c3ccd8;border-radius:4px;background:#fbfcfd"></div>
<div class="t c" style="left:-86.00px;top:431.45px">67.4579634</div>
<div class="t c" style="left:4.00px;top:431.45px">-44.080243</div>
<div class="t c" style="left:155.00px;top:431.45px">1252220598734556212</div>
<div class="t c" style="left:235.50px;top:431.45px">713446181</div>
<div class="t" style="left:442.50px;top:431.45px;font-size:14px;color:#2b3036">i</div>
<div class="t c" style="left:404.00px;top:431.45px">-1106.7616</div>
<div class="t c" style="left:513.00px;top:431.45px">462.5869823</div>
<div class="t c" style="left:622.50px;top:431.45px">60632.2990792</div>
<div class="a" style="left:0px;top:474px;width:826px;height:1px;background:#d5dce6"></div>
<div class="a" style="left:6px;top:454px;width:18px;height:17px;border:1px solid #c3ccd8;border-radius:4px;background:#fbfcfd"></div>
<div class="t c" style="left:-86.00px;top:456.45px">67.4579634</div>
<div class="t c" style="left:4.00px;top:456.45px">-44.080243</div>
<div class="t c" style="left:155.00px;top:456.45px">1252220598734556212</div>
<div class="t c" style="left:235.50px;top:456.45px">678572146</div>
<div class="t" style="left:442.50px;top:456.45px;font-size:14px;color:#2b3036">i</div>
<div class="t c" style="left:404.00px;top:456.45px">-284.3275704</div>
<div class="t c" style="left:513.00px;top:456.45px">187.3429373</div>
<div class="t c" style="left:622.50px;top:456.45px">60586.2208482</div>
<div class="a" style="left:0px;top:499px;width:826px;height:1px;background:#d5dce6"></div>
<div class="a" style="left:6px;top:479px;width:18px;height:17px;border:1px solid #c3ccd8;border-radius:4px;background:#fbfcfd"></div>
<div class="t c" style="left:-86.00px;top:481.45px">67.4579634</div>
<div class="t c" style="left:4.00px;top:481.45px">-44.080243</div>
<div class="t c" style="left:155.00px;top:481.45px">1252220598734556212</div>
<div class="t c" style="left:235.50px;top:481.45px">713019063</div>
<div class="t" style="left:442.50px;top:481.45px;font-size:14px;color:#2b3036">i</div>
<div class="t c" style="left:622.50px;top:481.45px">60632.1021292</div>
<div class="a" style="left:0px;top:524px;width:826px;height:1px;background:#d5dce6"></div>
<div class="a" style="left:6px;top:504px;width:18px;height:17px;border:1px solid #c3ccd8;border-radius:4px;background:#fbfcfd"></div>
<div class="t c" style="left:-86.00px;top:506.45px">67.4579634</div>
<div class="t c" style="left:4.00px;top:506.45px">-44.080243</div>
<div class="t c" style="left:155.00px;top:506.45px">1252220598734556212</div>
<div class="t c" style="left:235.50px;top:506.45px">1211939056</div>
<div class="t" style="left:442.50px;top:506.45px;font-size:14px;color:#2b3036">i</div>
<div class="t c" style="left:404.00px;top:506.45px">-17.8361279</div>
<div class="t c" style="left:513.00px;top:506.45px">264.3056388</div>
<div class="t c" style="left:622.50px;top:506.45px">61364.1877722</div>
<div class="a" style="left:0px;top:549px;width:826px;height:1px;background:#d5dce6"></div>
<div class="a" style="left:6px;top:529px;width:18px;height:17px;border:1px solid #c3ccd8;border-radius:4px;background:#fbfcfd"></div>
<div class="t c" style="left:-86.00px;top:531.45px">67.4579634</div>
<div class="t c" style="left:4.00px;top:531.45px">-44.080243</div>
<div class="t c" style="left:155.00px;top:531.45px">1252220598734556212</div>
<div class="t c" style="left:235.50px;top:531.45px">1013761053</div>
<div class="t" style="left:442.50px;top:531.45px;font-size:14px;color:#2b3036">i</div>
<div class="t c" style="left:404.00px;top:531.45px">241.8110645</div>
<div class="t c" style="left:513.00px;top:531.45px">511.5710086</div>
<div class="t c" style="left:622.50px;top:531.45px">61076.1615362</div>
<div class="a" style="left:0px;top:574px;width:826px;height:1px;background:#d5dce6"></div>
<div class="a" style="left:6px;top:554px;width:18px;height:17px;border:1px solid #c3ccd8;border-radius:4px;background:#fbfcfd"></div>
<div class="t c" style="left:-86.00px;top:556.45px">67.4579634</div>
<div class="t c" style="left:4.00px;top:556.45px">-44.080243</div>
<div class="t c" style="left:155.00px;top:556.45px">1252220598734556212</div>
<div class="t c" style="left:235.50px;top:556.45px">713487080</div>
<div class="t" style="left:442.50px;top:556.45px;font-size:14px;color:#2b3036">i</div>
<div class="t c" style="left:404.00px;top:556.45px">537.7047677</div>
<div class="t c" style="left:513.00px;top:556.45px">487.272272</div>
<div class="t c" style="left:622.50px;top:556.45px">60632.3178732</div>
<div class="a" style="left:0px;top:599px;width:826px;height:1px;background:#d5dce6"></div>
<div class="a" style="left:6px;top:579px;width:18px;height:17px;border:1px solid #c3ccd8;border-radius:4px;background:#fbfcfd"></div>
<div class="t c" style="left:-86.00px;top:581.45px">67.4579634</div>
<div class="t c" style="left:4.00px;top:581.45px">-44.080243</div>
<div class="t c" style="left:155.00px;top:581.45px">1252220598734556212</div>
<div class="t c" style="left:235.50px;top:581.45px">428550101</div>
<div class="t" style="left:442.50px;top:581.45px;font-size:14px;color:#2b3036">i</div>
<div class="t c" style="left:404.00px;top:581.45px">-84.3669946</div>
<div class="t c" style="left:513.00px;top:581.45px">304.8327829</div>
<div class="t c" style="left:622.50px;top:581.45px">60193.3506722</div>
<div class="a" style="left:0px;top:624px;width:826px;height:1px;background:#d5dce6"></div>
<div class="a" style="left:6px;top:604px;width:18px;height:17px;border:1px solid #c3ccd8;border-radius:4px;background:#fbfcfd"></div>
<div class="t c" style="left:-86.00px;top:606.45px">67.4579634</div>
<div class="t c" style="left:4.00px;top:606.45px">-44.080243</div>
<div class="t c" style="left:155.00px;top:606.45px">1252220598734556212</div>
<div class="t c" style="left:235.50px;top:606.45px">228038078</div>
<div class="t" style="left:442.50px;top:606.45px;font-size:14px;color:#2b3036">i</div>
<div class="t c" style="left:404.00px;top:606.45px">-212.5949135</div>
<div class="t c" style="left:513.00px;top:606.45px">247.2568857</div>
<div class="t c" style="left:622.50px;top:606.45px">59887.2458582</div>
<div class="a" style="left:0px;top:649px;width:826px;height:1px;background:#d5dce6"></div>
<div class="a" style="left:6px;top:629px;width:18px;height:17px;border:1px solid #c3ccd8;border-radius:4px;background:#fbfcfd"></div>
<div class="t c" style="left:-86.00px;top:631.45px">67.4579634</div>
<div class="t c" style="left:4.00px;top:631.45px">-44.080243</div>
<div class="t c" style="left:155.00px;top:631.45px">1252220598734556212</div>
<div class="t c" style="left:235.50px;top:631.45px">214651151</div>
<div class="t" style="left:442.50px;top:631.45px;font-size:14px;color:#2b3036">i</div>
<div class="t c" style="left:404.00px;top:631.45px">-369.2509883</div>
<div class="t c" style="left:513.00px;top:631.45px">194.1724354</div>
<div class="t c" style="left:622.50px;top:631.45px">59870.3073462</div>
<div class="a" style="left:0px;top:674px;width:826px;height:1px;background:#d5dce6"></div>
<div class="a" style="left:6px;top:654px;width:18px;height:17px;border:1px solid #c3ccd8;border-radius:4px;background:#fbfcfd"></div>
<div class="t c" style="left:-86.00px;top:656.45px">67.4579634</div>
<div class="t c" style="left:4.00px;top:656.45px">-44.080243</div>
<div class="t c" style="left:155.00px;top:656.45px">1252220598734556212</div>
<div class="t c" style="left:235.50px;top:656.45px">678632124</div>
<div class="t" style="left:442.50px;top:656.45px;font-size:14px;color:#2b3036">i</div>
<div class="t c" style="left:404.00px;top:656.45px">-295.6126943</div>
<div class="t c" style="left:513.00px;top:656.45px">164.786682</div>
<div class="t c" style="left:622.50px;top:656.45px">60586.2477452</div>
<div class="a" style="left:0px;top:699px;width:826px;height:1px;background:#d5dce6"></div>
<div class="a" style="left:6px;top:679px;width:18px;height:17px;border:1px solid #c3ccd8;border-radius:4px;background:#fbfcfd"></div>
<div class="t c" style="left:-86.00px;top:681.45px">67.4579634</div>
<div class="t c" style="left:4.00px;top:681.45px">-44.080243</div>
<div class="t c" style="left:155.00px;top:681.45px">1252220598734556212</div>
<div class="t c" style="left:235.50px;top:681.45px">1029869118</div>
<div class="t" style="left:442.50px;top:681.45px;font-size:14px;color:#2b3036">i</div>
<div class="t c" style="left:404.00px;top:681.45px">-583.0919461</div>
<div class="t c" style="left:513.00px;top:681.45px">263.6949979</div>
<div class="t c" style="left:622.50px;top:681.45px">61097.0961772</div>
<div class="a" style="left:0px;top:724px;width:826px;height:1px;background:#d5dce6"></div>
<div class="a" style="left:6px;top:704px;width:18px;height:17px;border:1px solid #c3ccd8;border-radius:4px;background:#fbfcfd"></div>
<div class="t c" style="left:-86.00px;top:706.45px">67.4579634</div>
<div class="t c" style="left:4.00px;top:706.45px">-44.080243</div>
<div class="t c" style="left:155.00px;top:706.45px">1252220598734556212</div>
<div class="t c" style="left:235.50px;top:706.45px">243869066</div>
<div class="t" style="left:442.50px;top:706.45px;font-size:14px;color:#2b3036">i</div>
<div class="t c" style="left:404.00px;top:706.45px">-566.1349599</div>
<div class="t c" style="left:513.00px;top:706.45px">259.4882851</div>
<div class="t c" style="left:622.50px;top:706.45px">59916.1231012</div>
<div class="a" style="left:0px;top:749px;width:826px;height:1px;background:#d5dce6"></div>
<div class="a" style="left:6px;top:729px;width:18px;height:17px;border:1px solid #c3ccd8;border-radius:4px;background:#fbfcfd"></div>
<div class="t c" style="left:-86.00px;top:731.45px">67.4579634</div>
<div class="t c" style="left:4.00px;top:731.45px">-44.080243</div>
<div class="t c" style="left:155.00px;top:731.45px">1252220598734556212</div>
<div class="t c" style="left:235.50px;top:731.45px">717348046</div>
<div class="t" style="left:442.50px;top:731.45px;font-size:14px;color:#2b3036">i</div>
<div class="t c" style="left:404.00px;top:731.45px">-118.322342</div>
<div class="t c" style="left:513.00px;top:731.45px">253.5588155</div>
<div class="t c" style="left:622.50px;top:731.45px">60641.0675902</div>
<div class="a" style="left:0px;top:774px;width:826px;height:1px;background:#d5dce6"></div>
<div class="a" style="left:6px;top:754px;width:18px;height:17px;border:1px solid #c3ccd8;border-radius:4px;background:#fbfcfd"></div>
<div class="a" style="left:30px;top:0px;width:2px;height:757px;background:#cdd5e0"></div>
<div class="a" style="left:117px;top:0px;width:1px;height:757px;background:#cdd5e0"></div>
<div class="a" style="left:207px;top:0px;width:1px;height:757px;background:#cdd5e0"></div>
<div class="a" style="left:358px;top:0px;width:1px;height:757px;background:#cdd5e0"></div>
<div class="a" style="left:438px;top:0px;width:1px;height:757px;background:#cdd5e0"></div>
<div class="a" style="left:495px;top:0px;width:1px;height:757px;background:#cdd5e0"></div>
<div class="a" style="left:607px;top:0px;width:1px;height:757px;background:#cdd5e0"></div>
<div class="a" style="left:716px;top:0px;width:1px;height:757px;background:#cdd5e0"></div>
<div class="a" style="left:825px;top:0px;width:1px;height:757px;background:#cdd5e0"></div>
<div class="a" style="left:935px;top:0px;width:1px;height:757px;background:#cdd5e0"></div>
<div class="a" style="left:941px;top:6px;width:8px;height:218px;background:#c5cfdb;border-radius:4px"></div>
<div class="a" style="left:0px;top:752px;width:935px;height:5px;background:linear-gradient(rgba(0,0,0,0),rgba(0,0,0,0.09))"></div>
</div>
<div class="a" style="left:958px;top:117px;width:954px;height:91px;background:#f9fafc"></div>
<div class="a" style="left:958px;top:208px;width:954px;height:1px;background:#c8d1dd"></div>
<div class="a" style="left:988px;top:117px;width:2px;height:91px;background:#c8d1dd"></div>
<div class="a" style="left:1075px;top:117px;width:1px;height:91px;background:#c8d1dd"></div>
<div class="a" style="left:1165px;top:117px;width:1px;height:91px;background:#c8d1dd"></div>
<div class="a" style="left:1316px;top:117px;width:1px;height:91px;background:#c8d1dd"></div>
<div class="a" style="left:1396px;top:117px;width:1px;height:91px;background:#c8d1dd"></div>
<div class="a" style="left:1453px;top:117px;width:1px;height:91px;background:#c8d1dd"></div>
<div class="a" style="left:1565px;top:117px;width:1px;height:91px;background:#c8d1dd"></div>
<div class="a" style="left:1674px;top:117px;width:1px;height:91px;background:#c8d1dd"></div>
<div class="a" style="left:1783px;top:117px;width:1px;height:91px;background:#c8d1dd"></div>
<div class="a" style="left:964px;top:120px;width:18px;height:17px;border:1px solid #c3ccd8;border-radius:4px;background:#fbfcfd"></div>
<svg class="a" style="left:963px;top:180px;" width="19" height="19" viewBox="0 0 19 19"><path d="M2 2.5 L17 2.5 L11.5 10 L11.5 17.5 L7.5 17.5 L7.5 10Z" fill="none" stroke="#2b3036" stroke-width="2.2" stroke-linejoin="round"/><rect x="7.5" y="10" width="4" height="7.5" fill="#2b3036"/></svg>
<div class="t" style="left:932.25px;width:200px;text-align:center;top:121.61px;font-size:14.4px;color:#23272b;">coord_ra</div>
<div class="t" style="left:932.25px;width:200px;text-align:center;top:139.61px;font-size:14.4px;color:#4a5057;">(deg)</div>
<div class="t" style="left:932.25px;width:200px;text-align:center;top:159.01px;font-size:14.4px;color:#4a5057;">double</div>
<div class="a" style="left:992px;top:175px;width:80px;height:31px;background:#fbfcfd;border:1px solid #c8d1dd;border-radius:6px"></div>
<div class="t" style="left:1020.50px;width:200px;text-align:center;top:121.61px;font-size:14.4px;color:#23272b;">coord_dec</div>
<div class="t" style="left:1020.50px;width:200px;text-align:center;top:139.61px;font-size:14.4px;color:#4a5057;">(deg)</div>
<div class="t" style="left:1020.50px;width:200px;text-align:center;top:159.01px;font-size:14.4px;color:#4a5057;">double</div>
<div class="a" style="left:1078px;top:175px;width:84px;height:31px;background:#fbfcfd;border:1px solid #c8d1dd;border-radius:6px"></div>
<div class="t" style="left:1141.00px;width:200px;text-align:center;top:121.61px;font-size:14.4px;color:#23272b;">diaObjectId</div>
<div class="t" style="left:1141.00px;width:200px;text-align:center;top:159.01px;font-size:14.4px;color:#4a5057;">long</div>
<div class="a" style="left:1168px;top:175px;width:145px;height:31px;background:#fbfcfd;border:1px solid #c8d1dd;border-radius:6px"></div>
<svg class="a" style="left:1296px;top:187px;" width="9" height="6" viewBox="0 0 9 6"><path d="M0.5 0.5 L8.5 0.5 L4.5 5Z" fill="#3a4047"/></svg>
<div class="t" style="left:1256.50px;width:200px;text-align:center;top:121.61px;font-size:14.4px;color:#23272b;">ccdVisitId</div>
<div class="t" style="left:1256.50px;width:200px;text-align:center;top:159.01px;font-size:14.4px;color:#4a5057;">long</div>
<div class="a" style="left:1319px;top:175px;width:74px;height:31px;background:#fbfcfd;border:1px solid #c8d1dd;border-radius:6px"></div>
<div class="t" style="left:1325.00px;width:200px;text-align:center;top:121.61px;font-size:14.4px;color:#23272b;">band</div>
<div class="t" style="left:1325.00px;width:200px;text-align:center;top:159.01px;font-size:14.4px;color:#4a5057;">char</div>
<div class="a" style="left:1399px;top:175px;width:51px;height:31px;background:#fbfcfd;border:1px solid #c8d1dd;border-radius:6px"></div>
<svg class="a" style="left:1433px;top:187px;" width="9" height="6" viewBox="0 0 9 6"><path d="M0.5 0.5 L8.5 0.5 L4.5 5Z" fill="#3a4047"/></svg>
<div class="t" style="left:1409.50px;width:200px;text-align:center;top:121.61px;font-size:14.4px;color:#23272b;">psfDiffFlux</div>
<div class="t" style="left:1409.50px;width:200px;text-align:center;top:139.61px;font-size:14.4px;color:#4a5057;">(nJy)</div>
<div class="t" style="left:1409.50px;width:200px;text-align:center;top:159.01px;font-size:14.4px;color:#4a5057;">double</div>
<div class="a" style="left:1456px;top:175px;width:106px;height:31px;background:#fbfcfd;border:1px solid #c8d1dd;border-radius:6px"></div>
<div class="t" style="left:1520.00px;width:200px;text-align:center;top:121.61px;font-size:14.4px;color:#23272b;">psfDiffFluxErr</div>
<div class="t" style="left:1520.00px;width:200px;text-align:center;top:139.61px;font-size:14.4px;color:#4a5057;">(nJy)</div>
<div class="t" style="left:1520.00px;width:200px;text-align:center;top:159.01px;font-size:14.4px;color:#4a5057;">double</div>
<div class="a" style="left:1568px;top:175px;width:103px;height:31px;background:#fbfcfd;border:1px solid #c8d1dd;border-radius:6px"></div>
<div class="t" style="left:1629.00px;width:200px;text-align:center;top:121.61px;font-size:14.4px;color:#23272b;">expMidptMJD</div>
<div class="t" style="left:1629.00px;width:200px;text-align:center;top:139.61px;font-size:14.4px;color:#4a5057;">(d)</div>
<div class="t" style="left:1629.00px;width:200px;text-align:center;top:159.01px;font-size:14.4px;color:#4a5057;">double</div>
<div class="a" style="left:1677px;top:175px;width:103px;height:31px;background:#fbfcfd;border:1px solid #c8d1dd;border-radius:6px"></div>
<svg class="a" style="left:468px;top:551px;" width="19" height="19" viewBox="0 0 19 19"><rect x="3.6" y="3.3" width="14.2" height="13.7" fill="none" stroke="#dc560e" stroke-width="2.8"/><g stroke="#f07512" stroke-width="1.3"><line x1="3.6" y1="3.3" x2="17.8" y2="17"/><line x1="17.8" y1="3.3" x2="3.6" y2="17"/></g><circle cx="10.7" cy="10.1" r="1.3" fill="#f07512"/></svg>
<div class="a" style="left:1913px;top:969px;width:8px;height:8px;background:#111;border-radius:50% 0 0 0"></div>
<div class="a" style="left:-4px;top:969px;width:6px;height:8px;background:#111;border-radius:0 50% 0 0"></div>
</body></html>
